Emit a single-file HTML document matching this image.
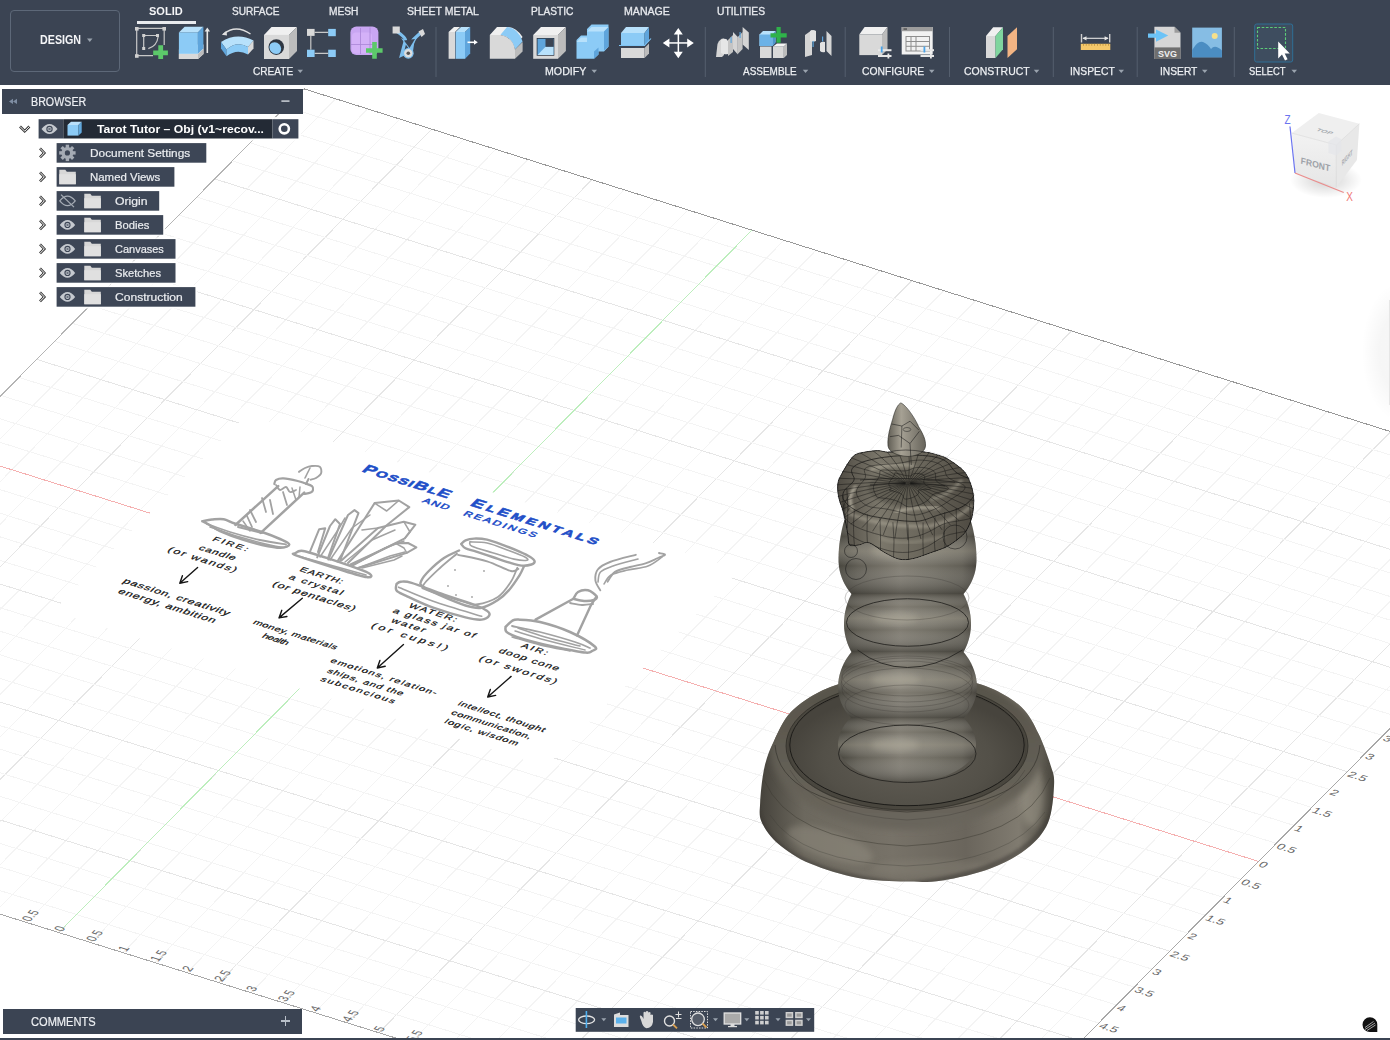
<!DOCTYPE html><html><head><meta charset="utf-8"><style>
html,body{margin:0;padding:0;width:1390px;height:1040px;overflow:hidden;background:#fff;}
body{position:relative;font-family:"Liberation Sans",sans-serif;}
.t{position:absolute;white-space:nowrap;line-height:1;transform-origin:0 0;}
.abs{position:absolute;}
#tb{position:absolute;left:0;top:0;width:1390px;height:85px;background:#3b4453;}
</style></head><body>
<svg class="abs" style="left:0;top:0" width="1390" height="1040" viewBox="0 0 1390 1040">
<defs><clipPath id="gc"><polygon points="-390.0,792.1 921.3,1202.5 1613.8,502.0 303.6,88.7"/></clipPath></defs>
<g clip-path="url(#gc)" stroke-width="1" fill="none" shape-rendering="crispEdges">
<line x1="-390.0" y1="792.1" x2="303.6" y2="88.7" stroke="#f4f4f4" stroke-width="1"/>
<line x1="-357.9" y1="802.1" x2="335.7" y2="98.8" stroke="#f4f4f4" stroke-width="1"/>
<line x1="-325.8" y1="812.2" x2="367.7" y2="108.9" stroke="#f4f4f4" stroke-width="1"/>
<line x1="-293.7" y1="822.2" x2="399.8" y2="119.0" stroke="#f4f4f4" stroke-width="1"/>
<line x1="-261.6" y1="832.3" x2="431.8" y2="129.1" stroke="#e6e6e6" stroke-width="1"/>
<line x1="-229.5" y1="842.3" x2="463.9" y2="139.2" stroke="#f4f4f4" stroke-width="1"/>
<line x1="-197.5" y1="852.3" x2="495.9" y2="149.3" stroke="#f4f4f4" stroke-width="1"/>
<line x1="-165.4" y1="862.4" x2="528.0" y2="159.4" stroke="#f4f4f4" stroke-width="1"/>
<line x1="-133.4" y1="872.4" x2="560.0" y2="169.5" stroke="#f4f4f4" stroke-width="1"/>
<line x1="-101.3" y1="882.4" x2="592.0" y2="179.6" stroke="#e6e6e6" stroke-width="1"/>
<line x1="-69.3" y1="892.4" x2="624.0" y2="189.7" stroke="#f4f4f4" stroke-width="1"/>
<line x1="-37.2" y1="902.5" x2="656.0" y2="199.8" stroke="#f4f4f4" stroke-width="1"/>
<line x1="-5.2" y1="912.5" x2="688.0" y2="209.9" stroke="#f4f4f4" stroke-width="1"/>
<line x1="26.8" y1="922.5" x2="720.0" y2="220.0" stroke="#f4f4f4" stroke-width="1"/>
<line x1="58.9" y1="932.5" x2="752.0" y2="230.1" stroke="#e6e6e6" stroke-width="1"/>
<line x1="90.9" y1="942.6" x2="784.0" y2="240.2" stroke="#f4f4f4" stroke-width="1"/>
<line x1="122.9" y1="952.6" x2="816.0" y2="250.3" stroke="#f4f4f4" stroke-width="1"/>
<line x1="154.9" y1="962.6" x2="848.0" y2="260.4" stroke="#f4f4f4" stroke-width="1"/>
<line x1="186.9" y1="972.6" x2="880.0" y2="270.5" stroke="#f4f4f4" stroke-width="1"/>
<line x1="218.9" y1="982.6" x2="911.9" y2="280.6" stroke="#e6e6e6" stroke-width="1"/>
<line x1="250.9" y1="992.6" x2="943.9" y2="290.6" stroke="#f4f4f4" stroke-width="1"/>
<line x1="282.8" y1="1002.6" x2="975.8" y2="300.7" stroke="#f4f4f4" stroke-width="1"/>
<line x1="314.8" y1="1012.6" x2="1007.8" y2="310.8" stroke="#f4f4f4" stroke-width="1"/>
<line x1="346.8" y1="1022.7" x2="1039.7" y2="320.9" stroke="#f4f4f4" stroke-width="1"/>
<line x1="378.8" y1="1032.7" x2="1071.7" y2="330.9" stroke="#e6e6e6" stroke-width="1"/>
<line x1="410.7" y1="1042.7" x2="1103.6" y2="341.0" stroke="#f4f4f4" stroke-width="1"/>
<line x1="442.7" y1="1052.7" x2="1135.5" y2="351.1" stroke="#f4f4f4" stroke-width="1"/>
<line x1="474.6" y1="1062.7" x2="1167.5" y2="361.2" stroke="#f4f4f4" stroke-width="1"/>
<line x1="506.6" y1="1072.7" x2="1199.4" y2="371.2" stroke="#f4f4f4" stroke-width="1"/>
<line x1="538.5" y1="1082.6" x2="1231.3" y2="381.3" stroke="#e6e6e6" stroke-width="1"/>
<line x1="570.4" y1="1092.6" x2="1263.2" y2="391.4" stroke="#f4f4f4" stroke-width="1"/>
<line x1="602.4" y1="1102.6" x2="1295.1" y2="401.4" stroke="#f4f4f4" stroke-width="1"/>
<line x1="634.3" y1="1112.6" x2="1327.0" y2="411.5" stroke="#f4f4f4" stroke-width="1"/>
<line x1="666.2" y1="1122.6" x2="1358.9" y2="421.5" stroke="#f4f4f4" stroke-width="1"/>
<line x1="698.1" y1="1132.6" x2="1390.8" y2="431.6" stroke="#e6e6e6" stroke-width="1"/>
<line x1="730.0" y1="1142.6" x2="1422.6" y2="441.7" stroke="#f4f4f4" stroke-width="1"/>
<line x1="761.9" y1="1152.6" x2="1454.5" y2="451.7" stroke="#f4f4f4" stroke-width="1"/>
<line x1="793.8" y1="1162.5" x2="1486.4" y2="461.8" stroke="#f4f4f4" stroke-width="1"/>
<line x1="825.7" y1="1172.5" x2="1518.2" y2="471.8" stroke="#f4f4f4" stroke-width="1"/>
<line x1="857.6" y1="1182.5" x2="1550.1" y2="481.9" stroke="#e6e6e6" stroke-width="1"/>
<line x1="889.5" y1="1192.5" x2="1582.0" y2="491.9" stroke="#f4f4f4" stroke-width="1"/>
<line x1="921.3" y1="1202.5" x2="1613.8" y2="502.0" stroke="#f4f4f4" stroke-width="1"/>
<line x1="-390.0" y1="792.1" x2="921.3" y2="1202.5" stroke="#f4f4f4" stroke-width="1"/>
<line x1="-372.2" y1="774.1" x2="939.1" y2="1184.5" stroke="#f4f4f4" stroke-width="1"/>
<line x1="-354.4" y1="756.1" x2="956.8" y2="1166.6" stroke="#f4f4f4" stroke-width="1"/>
<line x1="-336.7" y1="738.0" x2="974.5" y2="1148.6" stroke="#f4f4f4" stroke-width="1"/>
<line x1="-318.9" y1="720.0" x2="992.3" y2="1130.7" stroke="#e6e6e6" stroke-width="1"/>
<line x1="-301.1" y1="702.0" x2="1010.0" y2="1112.7" stroke="#f4f4f4" stroke-width="1"/>
<line x1="-283.3" y1="684.0" x2="1027.8" y2="1094.8" stroke="#f4f4f4" stroke-width="1"/>
<line x1="-265.6" y1="665.9" x2="1045.5" y2="1076.8" stroke="#f4f4f4" stroke-width="1"/>
<line x1="-247.8" y1="647.9" x2="1063.3" y2="1058.9" stroke="#f4f4f4" stroke-width="1"/>
<line x1="-230.0" y1="629.9" x2="1081.0" y2="1040.9" stroke="#e6e6e6" stroke-width="1"/>
<line x1="-212.3" y1="611.9" x2="1098.7" y2="1023.0" stroke="#f4f4f4" stroke-width="1"/>
<line x1="-194.5" y1="593.8" x2="1116.5" y2="1005.0" stroke="#f4f4f4" stroke-width="1"/>
<line x1="-176.7" y1="575.8" x2="1134.2" y2="987.1" stroke="#f4f4f4" stroke-width="1"/>
<line x1="-158.9" y1="557.8" x2="1152.0" y2="969.1" stroke="#f4f4f4" stroke-width="1"/>
<line x1="-141.1" y1="539.7" x2="1169.7" y2="951.2" stroke="#e6e6e6" stroke-width="1"/>
<line x1="-123.4" y1="521.7" x2="1187.5" y2="933.2" stroke="#f4f4f4" stroke-width="1"/>
<line x1="-105.6" y1="503.7" x2="1205.2" y2="915.2" stroke="#f4f4f4" stroke-width="1"/>
<line x1="-87.8" y1="485.6" x2="1223.0" y2="897.3" stroke="#f4f4f4" stroke-width="1"/>
<line x1="-70.0" y1="467.6" x2="1240.8" y2="879.3" stroke="#f4f4f4" stroke-width="1"/>
<line x1="-52.2" y1="449.6" x2="1258.5" y2="861.4" stroke="#e6e6e6" stroke-width="1"/>
<line x1="-34.5" y1="431.5" x2="1276.3" y2="843.4" stroke="#f4f4f4" stroke-width="1"/>
<line x1="-16.7" y1="413.5" x2="1294.0" y2="825.4" stroke="#f4f4f4" stroke-width="1"/>
<line x1="1.1" y1="395.5" x2="1311.8" y2="807.5" stroke="#f4f4f4" stroke-width="1"/>
<line x1="18.9" y1="377.4" x2="1329.5" y2="789.5" stroke="#f4f4f4" stroke-width="1"/>
<line x1="36.7" y1="359.4" x2="1347.3" y2="771.6" stroke="#e6e6e6" stroke-width="1"/>
<line x1="54.5" y1="341.3" x2="1365.1" y2="753.6" stroke="#f4f4f4" stroke-width="1"/>
<line x1="72.3" y1="323.3" x2="1382.8" y2="735.6" stroke="#f4f4f4" stroke-width="1"/>
<line x1="90.0" y1="305.3" x2="1400.6" y2="717.7" stroke="#f4f4f4" stroke-width="1"/>
<line x1="107.8" y1="287.2" x2="1418.3" y2="699.7" stroke="#f4f4f4" stroke-width="1"/>
<line x1="125.6" y1="269.2" x2="1436.1" y2="681.7" stroke="#e6e6e6" stroke-width="1"/>
<line x1="143.4" y1="251.1" x2="1453.9" y2="663.7" stroke="#f4f4f4" stroke-width="1"/>
<line x1="161.2" y1="233.1" x2="1471.6" y2="645.8" stroke="#f4f4f4" stroke-width="1"/>
<line x1="179.0" y1="215.0" x2="1489.4" y2="627.8" stroke="#f4f4f4" stroke-width="1"/>
<line x1="196.8" y1="197.0" x2="1507.2" y2="609.8" stroke="#f4f4f4" stroke-width="1"/>
<line x1="214.6" y1="178.9" x2="1524.9" y2="591.8" stroke="#e6e6e6" stroke-width="1"/>
<line x1="232.4" y1="160.9" x2="1542.7" y2="573.9" stroke="#f4f4f4" stroke-width="1"/>
<line x1="250.2" y1="142.8" x2="1560.5" y2="555.9" stroke="#f4f4f4" stroke-width="1"/>
<line x1="268.0" y1="124.8" x2="1578.3" y2="537.9" stroke="#f4f4f4" stroke-width="1"/>
<line x1="285.8" y1="106.7" x2="1596.0" y2="519.9" stroke="#f4f4f4" stroke-width="1"/>
<line x1="303.6" y1="88.7" x2="1613.8" y2="502.0" stroke="#e6e6e6" stroke-width="1"/>
</g>
<g shape-rendering="crispEdges">
<line x1="303.6" y1="88.7" x2="1613.8" y2="502.0" stroke="#999999" stroke-width="1"/>
<line x1="921.3" y1="1202.5" x2="1613.8" y2="502.0" stroke="#a8a8a8" stroke-width="1"/>
<line x1="-390.0" y1="792.1" x2="303.6" y2="88.7" stroke="#b4b4b4" stroke-width="1"/>
<line x1="-390.0" y1="792.1" x2="921.3" y2="1202.5" stroke="#a8a8a8" stroke-width="1"/>
<line x1="-52.2" y1="449.6" x2="1258.5" y2="861.4" stroke="#f5b0b0" stroke-width="1"/>
<line x1="62.4" y1="928.9" x2="752.0" y2="230.1" stroke="#bdeebd" stroke-width="1"/>
</g>
<g font-family="Liberation Sans" font-size="10" fill="#666">
<text transform="matrix(0.710 -0.714 1.276 0.402 29.8 922.0)">0.5</text>
<text transform="matrix(0.710 -0.714 1.276 0.402 61.9 932.0)">0</text>
<text transform="matrix(0.710 -0.714 1.276 0.402 93.9 942.1)">0.5</text>
<text transform="matrix(0.710 -0.714 1.276 0.402 125.9 952.1)">1</text>
<text transform="matrix(0.710 -0.714 1.276 0.402 157.9 962.1)">1.5</text>
<text transform="matrix(0.710 -0.714 1.276 0.402 189.9 972.1)">2</text>
<text transform="matrix(0.710 -0.714 1.276 0.402 221.9 982.1)">2.5</text>
<text transform="matrix(0.710 -0.714 1.276 0.402 253.9 992.1)">3</text>
<text transform="matrix(0.710 -0.714 1.276 0.402 285.8 1002.1)">3.5</text>
<text transform="matrix(0.710 -0.714 1.276 0.402 317.8 1012.1)">4</text>
<text transform="matrix(0.710 -0.714 1.276 0.402 349.8 1022.2)">4.5</text>
<text transform="matrix(0.710 -0.714 1.276 0.402 381.8 1032.2)">5</text>
<text transform="matrix(0.710 -0.714 1.276 0.402 413.7 1042.2)">5.5</text>
<text transform="matrix(1.276 0.402 -0.710 0.714 1097.7 1027.5)" font-size="10">4.5</text>
<text transform="matrix(1.276 0.402 -0.710 0.714 1115.5 1009.5)" font-size="10">4</text>
<text transform="matrix(1.276 0.402 -0.710 0.714 1133.2 991.6)" font-size="10">3.5</text>
<text transform="matrix(1.276 0.402 -0.710 0.714 1151.0 973.6)" font-size="10">3</text>
<text transform="matrix(1.276 0.402 -0.710 0.714 1168.7 955.7)" font-size="10">2.5</text>
<text transform="matrix(1.276 0.402 -0.710 0.714 1186.5 937.7)" font-size="10">2</text>
<text transform="matrix(1.276 0.402 -0.710 0.714 1204.2 919.7)" font-size="10">1.5</text>
<text transform="matrix(1.276 0.402 -0.710 0.714 1222.0 901.8)" font-size="10">1</text>
<text transform="matrix(1.276 0.402 -0.710 0.714 1239.8 883.8)" font-size="10">0.5</text>
<text transform="matrix(1.276 0.402 -0.710 0.714 1257.5 865.9)" font-size="10">0</text>
<text transform="matrix(1.276 0.402 -0.710 0.714 1275.3 847.9)" font-size="10">0.5</text>
<text transform="matrix(1.276 0.402 -0.710 0.714 1293.0 829.9)" font-size="10">1</text>
<text transform="matrix(1.276 0.402 -0.710 0.714 1310.8 812.0)" font-size="10">1.5</text>
<text transform="matrix(1.276 0.402 -0.710 0.714 1328.5 794.0)" font-size="10">2</text>
<text transform="matrix(1.276 0.402 -0.710 0.714 1346.3 776.1)" font-size="10">2.5</text>
<text transform="matrix(1.276 0.402 -0.710 0.714 1364.1 758.1)" font-size="10">3</text>
<text transform="matrix(1.276 0.402 -0.710 0.714 1381.8 740.1)" font-size="10">3.5</text>
</g>
</svg>
<svg class="abs" style="left:0;top:0" width="1390" height="1040" viewBox="0 0 1390 1040">
<polygon points="246.6,414.9 739.4,569.9 545.9,765.9 53,611.2" fill="#fff"/>
<g><path d="M202.3 521.2 C203.9 520.9 208.4 519.8 212.0 519.5 C215.6 519.2 219.8 518.5 223.7 519.2 C227.6 519.9 229.0 521.7 235.4 523.8 C241.8 525.9 254.6 529.5 262.0 532.0 C269.4 534.5 275.4 536.9 280.0 539.0 C284.6 541.1 289.2 543.0 289.3 544.5 C289.4 546.0 285.4 547.7 280.8 547.8 C276.2 547.9 268.5 546.4 262.0 545.0 C255.5 543.6 248.9 541.7 241.9 539.4 C234.9 537.1 225.4 533.4 220.0 531.0 C214.6 528.6 212.4 526.6 209.5 525.0 C206.6 523.4 203.5 521.8 202.3 521.2" fill="none" stroke="#a2a2a2" stroke-width="2.5" stroke-linejoin="round" stroke-linecap="round"/><path d="M206.9 523.8 C210.8 525.2 221.2 529.3 230.0 532.0 C238.8 534.7 250.7 537.9 260.0 540.0 C269.3 542.1 281.7 543.8 286.0 544.5" fill="none" stroke="#a2a2a2" stroke-width="1.8" stroke-linejoin="round" stroke-linecap="round"/><path d="M210.0 527.0 C215.0 528.7 230.0 534.0 240.0 537.0 C250.0 540.0 262.7 543.2 270.0 545.0 C277.3 546.8 281.7 547.1 284.0 547.5" fill="none" stroke="#a2a2a2" stroke-width="1.5" stroke-linejoin="round" stroke-linecap="round"/><path d="M235.4 525.0 L278.2 486.1" fill="none" stroke="#a2a2a2" stroke-width="2.5" stroke-linejoin="round" stroke-linecap="round"/><path d="M260.7 532.9 L304.2 492.6" fill="none" stroke="#a2a2a2" stroke-width="2.5" stroke-linejoin="round" stroke-linecap="round"/><path d="M238.0 527.0 L262.0 533.0" fill="none" stroke="#a2a2a2" stroke-width="2.0" stroke-linejoin="round" stroke-linecap="round"/><path d="M274.3 484.0 C274.6 483.3 274.5 480.9 276.0 480.0 C277.5 479.1 279.8 478.2 283.4 478.4 C287.0 478.6 294.3 480.2 297.7 481.0 C301.1 481.8 301.6 482.1 304.0 483.0 C306.4 483.9 310.5 484.9 312.0 486.1 C313.5 487.3 313.2 488.9 313.0 490.0 C312.8 491.1 312.2 491.9 310.7 492.6 C309.2 493.3 305.1 493.8 304.0 494.0" fill="none" stroke="#a2a2a2" stroke-width="2.2" stroke-linejoin="round" stroke-linecap="round"/><path d="M276.0 485.0 C276.7 485.8 278.3 489.7 280.0 490.0 C281.7 490.3 284.3 486.7 286.0 487.0 C287.7 487.3 288.3 491.5 290.0 492.0 C291.7 492.5 295.0 490.3 296.0 490.0" fill="none" stroke="#a2a2a2" stroke-width="1.8" stroke-linejoin="round" stroke-linecap="round"/><path d="M299.0 471.9 C300.0 471.2 302.8 469.0 305.0 468.0 C307.2 467.0 309.5 466.2 312.0 466.0 C314.5 465.8 318.3 465.5 319.8 466.7 C321.3 467.9 321.7 471.3 321.1 473.2 C320.5 475.1 317.7 476.9 316.0 478.0 C314.3 479.1 311.6 479.4 310.7 479.7" fill="none" stroke="#a2a2a2" stroke-width="1.9" stroke-linejoin="round" stroke-linecap="round"/><path d="M305.0 478.0 C305.5 477.0 307.2 473.7 308.0 472.0 C308.8 470.3 309.7 468.7 310.0 468.0" fill="none" stroke="#a2a2a2" stroke-width="1.6" stroke-linejoin="round" stroke-linecap="round"/><path d="M308.5 479.0 L306.0 484.0" fill="none" stroke="#a2a2a2" stroke-width="2.0" stroke-linejoin="round" stroke-linecap="round"/><path d="M250.0 510.0 L256.0 522.0" fill="none" stroke="#a2a2a2" stroke-width="1.8" stroke-linejoin="round" stroke-linecap="round"/><path d="M262.0 498.0 L266.0 512.0" fill="none" stroke="#a2a2a2" stroke-width="1.8" stroke-linejoin="round" stroke-linecap="round"/><path d="M270.0 500.0 L273.0 514.0" fill="none" stroke="#a2a2a2" stroke-width="1.8" stroke-linejoin="round" stroke-linecap="round"/><path d="M283.0 492.0 L287.0 505.0" fill="none" stroke="#a2a2a2" stroke-width="1.8" stroke-linejoin="round" stroke-linecap="round"/><path d="M247.0 516.0 L252.0 527.0" fill="none" stroke="#a2a2a2" stroke-width="1.8" stroke-linejoin="round" stroke-linecap="round"/><path d="M295.0 553.4 C296.4 553.0 297.3 550.0 303.1 550.9 C308.9 551.8 319.3 555.4 330.0 559.0 C340.7 562.6 361.4 569.5 367.5 572.5 C373.6 575.5 371.9 577.9 366.5 577.1 C361.1 576.4 346.8 571.6 335.0 568.0 C323.2 564.4 302.7 557.8 296.0 555.4 C289.3 553.0 295.2 553.7 295.0 553.4" fill="none" stroke="#a2a2a2" stroke-width="2.5" stroke-linejoin="round" stroke-linecap="round"/><path d="M298.0 556.0 C303.3 557.5 318.7 561.8 330.0 565.0 C341.3 568.2 360.0 573.3 366.0 575.0" fill="none" stroke="#a2a2a2" stroke-width="1.6" stroke-linejoin="round" stroke-linecap="round"/><path d="M310.1 551.4 L319.2 529.2 L325.2 528.2 L318.0 552.0" fill="none" stroke="#a2a2a2" stroke-width="2.0" stroke-linejoin="round" stroke-linecap="round"/><path d="M317.2 557.4 L330.0 526.0 L335.3 519.2 L340.0 524.0 L328.0 558.0" fill="none" stroke="#a2a2a2" stroke-width="2.0" stroke-linejoin="round" stroke-linecap="round"/><path d="M328.3 559.5 L348.0 515.0 L354.5 510.1 L358.5 513.1 L340.0 561.0" fill="none" stroke="#a2a2a2" stroke-width="2.0" stroke-linejoin="round" stroke-linecap="round"/><path d="M337.3 561.5 L374.6 503.1 L398.8 500.5 L409.3 507.1 L386.7 525.2 L348.0 563.0" fill="none" stroke="#a2a2a2" stroke-width="2.0" stroke-linejoin="round" stroke-linecap="round"/><path d="M341.4 560.5 L378.0 528.0 L403.8 521.7 L415.4 524.7 L404.8 538.3 L352.0 565.0" fill="none" stroke="#a2a2a2" stroke-width="2.0" stroke-linejoin="round" stroke-linecap="round"/><path d="M350.4 564.5 L395.7 543.3 L408.0 543.0 L416.4 547.4 L406.8 552.9 L358.0 568.0" fill="none" stroke="#a2a2a2" stroke-width="2.0" stroke-linejoin="round" stroke-linecap="round"/><path d="M374.6 503.1 L386.7 511.0 L398.8 500.5" fill="none" stroke="#a2a2a2" stroke-width="1.6" stroke-linejoin="round" stroke-linecap="round"/><path d="M362.0 530.0 L378.0 528.0" fill="none" stroke="#a2a2a2" stroke-width="1.6" stroke-linejoin="round" stroke-linecap="round"/><path d="M461.2 544.0 C461.9 543.4 463.3 541.2 465.5 540.3 C467.7 539.4 470.6 538.7 474.2 538.6 C477.8 538.5 482.2 538.6 487.1 539.7 C492.0 540.8 497.9 543.1 503.3 545.1 C508.7 547.1 515.0 549.6 519.5 551.6 C524.0 553.6 527.8 555.4 530.3 557.0 C532.8 558.6 534.4 560.0 534.6 561.3 C534.8 562.5 533.5 563.8 531.4 564.5 C529.2 565.2 525.5 566.0 521.7 565.6 C517.9 565.2 513.6 563.8 508.7 562.4 C503.8 561.0 497.9 558.8 492.5 557.0 C487.1 555.2 480.8 553.1 476.3 551.6 C471.8 550.1 468.0 549.6 465.5 548.3 C463.0 547.0 461.9 544.7 461.2 544.0" fill="none" stroke="#a2a2a2" stroke-width="2.4" stroke-linejoin="round" stroke-linecap="round"/><path d="M469.9 541.9 C472.8 542.1 480.6 541.6 487.1 543.0 C493.6 544.4 502.4 548.2 508.7 550.5 C515.0 552.8 521.9 555.4 524.9 557.0 C527.9 558.6 528.8 559.9 527.0 560.2 C525.2 560.6 519.9 560.4 514.1 559.1 C508.4 557.9 499.5 554.9 492.5 552.7 C485.5 550.6 475.8 548.0 472.0 546.2 C468.2 544.4 470.2 542.6 469.9 541.9" fill="none" stroke="#a2a2a2" stroke-width="1.6" stroke-linejoin="round" stroke-linecap="round"/><path d="M459.1 550.5 C456.6 551.8 449.1 554.6 444.0 558.0 C438.9 561.4 432.6 567.2 428.8 571.0 C425.0 574.8 422.4 578.2 421.3 580.7 C420.2 583.2 419.5 583.8 422.4 586.1 C425.3 588.4 431.4 591.5 438.6 594.7 C445.8 597.9 458.3 603.3 465.5 605.5 C472.7 607.7 476.3 608.6 481.7 607.7 C487.1 606.8 493.4 603.0 497.9 600.1 C502.4 597.2 505.1 594.5 508.7 590.4 C512.3 586.3 517.0 579.2 519.5 575.3 C522.0 571.3 523.1 568.1 523.8 566.7" fill="none" stroke="#a2a2a2" stroke-width="2.4" stroke-linejoin="round" stroke-linecap="round"/><path d="M456.9 553.7 C454.1 556.1 445.6 562.8 440.0 568.0 C434.4 573.2 425.5 581.3 423.5 585.0 C421.5 588.7 420.8 587.5 427.8 590.4 C434.8 593.3 457.4 599.9 465.5 602.3 C473.6 604.6 470.9 605.4 476.3 604.5 C481.7 603.6 492.1 600.7 497.9 596.9 C503.7 593.1 507.7 586.6 510.9 581.8 C514.1 576.9 516.2 570.1 517.3 567.8" fill="none" stroke="#a2a2a2" stroke-width="1.8" stroke-linejoin="round" stroke-linecap="round"/><path d="M458.0 554.8 C462.9 555.9 478.3 558.6 487.1 561.3 C495.9 564.0 505.7 569.8 510.9 571.0 C516.1 572.2 517.1 569.2 518.4 568.8" fill="none" stroke="#a2a2a2" stroke-width="1.8" stroke-linejoin="round" stroke-linecap="round"/><path d="M396.5 584.0 C397.2 583.6 398.3 582.0 400.8 581.8 C403.3 581.6 404.4 580.8 411.6 582.9 C418.8 585.0 433.2 590.9 444.0 594.7 C454.8 598.5 469.1 602.8 476.3 605.5 C483.5 608.2 484.9 609.3 487.1 610.9 C489.3 612.5 490.2 613.8 489.3 615.3 C488.4 616.8 485.7 619.2 481.7 619.6 C477.7 620.0 473.6 619.4 465.5 617.4 C457.4 615.4 443.1 611.3 433.2 607.7 C423.3 604.1 412.3 598.7 406.2 595.8 C400.1 592.9 398.1 592.4 396.5 590.4 C394.9 588.4 396.5 585.1 396.5 584.0" fill="none" stroke="#a2a2a2" stroke-width="2.4" stroke-linejoin="round" stroke-linecap="round"/><path d="M398.6 587.2 C404.4 589.5 419.4 596.4 433.2 601.2 C447.0 606.1 473.6 613.8 481.7 616.3" fill="none" stroke="#a2a2a2" stroke-width="1.6" stroke-linejoin="round" stroke-linecap="round"/><circle cx="455.0" cy="570.0" r="0.9" fill="#a2a2a2"/><circle cx="484.0" cy="571.0" r="0.9" fill="#a2a2a2"/><circle cx="448.0" cy="586.0" r="0.9" fill="#a2a2a2"/><circle cx="456.0" cy="595.0" r="0.9" fill="#a2a2a2"/><circle cx="472.0" cy="597.0" r="0.9" fill="#a2a2a2"/><path d="M505.5 627.0 C506.6 626.0 509.9 622.2 512.0 621.0 C514.1 619.8 513.6 619.4 518.3 619.6 C523.0 619.8 531.4 619.9 540.0 622.0 C548.6 624.1 560.9 627.9 570.0 632.0 C579.1 636.1 591.1 643.3 594.8 646.5 C598.5 649.7 593.5 650.0 592.0 651.0 C590.5 652.0 590.9 653.1 585.6 652.6 C580.3 652.1 569.3 649.9 560.0 648.0 C550.7 646.1 538.7 643.5 530.0 641.0 C521.3 638.5 512.1 635.3 508.0 633.0 C503.9 630.7 505.9 628.0 505.5 627.0" fill="none" stroke="#a2a2a2" stroke-width="2.5" stroke-linejoin="round" stroke-linecap="round"/><path d="M512.0 626.0 C516.7 627.0 529.5 629.3 540.0 632.0 C550.5 634.7 566.7 639.3 575.0 642.0 C583.3 644.7 587.5 647.0 590.0 648.0" fill="none" stroke="#a2a2a2" stroke-width="1.8" stroke-linejoin="round" stroke-linecap="round"/><path d="M518.0 628.0 C522.5 629.5 534.7 634.0 545.0 637.0 C555.3 640.0 574.2 644.5 580.0 646.0" fill="none" stroke="#a2a2a2" stroke-width="1.6" stroke-linejoin="round" stroke-linecap="round"/><path d="M535.5 619.6 L573.4 598.8" fill="none" stroke="#a2a2a2" stroke-width="2.4" stroke-linejoin="round" stroke-linecap="round"/><path d="M577.0 635.5 L591.0 605.0 L596.6 596.4" fill="none" stroke="#a2a2a2" stroke-width="2.4" stroke-linejoin="round" stroke-linecap="round"/><path d="M573.4 598.8 C574.2 597.7 575.6 593.4 578.0 592.0 C580.4 590.6 584.9 589.6 588.0 590.3 C591.1 591.0 595.6 594.8 596.6 596.4 C597.6 598.0 596.1 599.2 594.0 600.0 C591.9 600.8 587.4 601.2 584.0 601.0 C580.6 600.8 575.2 599.2 573.4 598.8" fill="none" stroke="#a2a2a2" stroke-width="2.5" stroke-linejoin="round" stroke-linecap="round"/><path d="M570.0 603.0 C572.0 603.3 578.2 604.8 582.0 605.0 C585.8 605.2 591.2 604.2 593.0 604.0" fill="none" stroke="#a2a2a2" stroke-width="1.8" stroke-linejoin="round" stroke-linecap="round"/><path d="M600.3 590.3 C599.5 588.7 595.8 584.0 595.4 580.5 C595.0 577.0 595.4 572.6 597.8 569.5 C600.2 566.4 603.7 564.5 610.0 562.0 C616.3 559.5 631.5 556.0 635.8 554.8" fill="none" stroke="#a2a2a2" stroke-width="1.9" stroke-linejoin="round" stroke-linecap="round"/><path d="M598.0 582.0 C598.4 580.3 598.0 574.7 600.5 572.0 C603.0 569.3 606.8 568.2 613.0 566.0 C619.2 563.8 633.8 560.2 638.0 559.0" fill="none" stroke="#a2a2a2" stroke-width="1.6" stroke-linejoin="round" stroke-linecap="round"/><path d="M607.6 581.7 C608.8 580.1 611.3 574.4 615.0 571.9 C618.7 569.4 624.9 568.4 630.0 567.0 C635.1 565.6 640.8 564.8 645.5 563.3 C650.2 561.8 654.7 559.4 658.0 558.0 C661.3 556.6 664.9 555.6 665.1 554.8 C665.3 554.0 660.0 553.3 659.0 553.0" fill="none" stroke="#a2a2a2" stroke-width="1.9" stroke-linejoin="round" stroke-linecap="round"/><path d="M604.0 584.0 C605.2 582.5 607.0 577.3 611.0 575.0 C615.0 572.7 621.8 571.5 628.0 570.0 C634.2 568.5 642.3 568.2 648.0 566.0 C653.7 563.8 659.7 558.5 662.0 557.0" fill="none" stroke="#a2a2a2" stroke-width="1.6" stroke-linejoin="round" stroke-linecap="round"/><path d="M345.0 562.0 L372.0 540.0 L395.0 530.0" fill="none" stroke="#a2a2a2" stroke-width="1.5" stroke-linejoin="round" stroke-linecap="round"/><path d="M352.0 566.0 L385.0 548.0 L404.0 541.0" fill="none" stroke="#a2a2a2" stroke-width="1.5" stroke-linejoin="round" stroke-linecap="round"/><path d="M358.0 568.0 L390.0 556.0 L405.0 552.0" fill="none" stroke="#a2a2a2" stroke-width="1.5" stroke-linejoin="round" stroke-linecap="round"/><path d="M330.0 560.0 L352.0 528.0 L370.0 515.0" fill="none" stroke="#a2a2a2" stroke-width="1.5" stroke-linejoin="round" stroke-linecap="round"/><path d="M320.0 557.0 L338.0 530.0 L345.0 518.0" fill="none" stroke="#a2a2a2" stroke-width="1.5" stroke-linejoin="round" stroke-linecap="round"/><path d="M362.0 568.0 L394.0 560.0 L402.0 556.0" fill="none" stroke="#a2a2a2" stroke-width="1.5" stroke-linejoin="round" stroke-linecap="round"/><path d="M395.7 543.3 L404.0 548.0 L406.8 552.9" fill="none" stroke="#a2a2a2" stroke-width="1.5" stroke-linejoin="round" stroke-linecap="round"/><path d="M403.8 521.7 L410.0 532.0 L404.8 538.3" fill="none" stroke="#a2a2a2" stroke-width="1.5" stroke-linejoin="round" stroke-linecap="round"/><path d="M515.0 631.0 C520.0 632.5 533.3 636.8 545.0 640.0 C556.7 643.2 578.3 648.3 585.0 650.0" fill="none" stroke="#a2a2a2" stroke-width="1.5" stroke-linejoin="round" stroke-linecap="round"/><path d="M512.0 637.0 C516.7 638.3 530.3 642.7 540.0 645.0 C549.7 647.3 565.0 650.0 570.0 651.0" fill="none" stroke="#a2a2a2" stroke-width="1.4" stroke-linejoin="round" stroke-linecap="round"/><path d="M215.0 529.0 C220.0 530.8 234.2 536.8 245.0 540.0 C255.8 543.2 274.2 546.7 280.0 548.0" fill="none" stroke="#a2a2a2" stroke-width="1.4" stroke-linejoin="round" stroke-linecap="round"/><path d="M243.0 521.0 L250.0 531.0" fill="none" stroke="#a2a2a2" stroke-width="1.5" stroke-linejoin="round" stroke-linecap="round"/><path d="M292.0 488.0 L296.0 500.0" fill="none" stroke="#a2a2a2" stroke-width="1.5" stroke-linejoin="round" stroke-linecap="round"/><path d="M300.0 487.0 L299.0 497.0" fill="none" stroke="#a2a2a2" stroke-width="1.5" stroke-linejoin="round" stroke-linecap="round"/></g>
<g transform="matrix(0.638 0.201 -0.355 0.357 246.3 415.4)" font-family="Liberation Sans">
<text x="203" y="42" fill="#1f4fc8" font-weight="bold" stroke="#1f4fc8" stroke-width="1.3" textLength="135" lengthAdjust="spacing"><tspan font-size="28">P</tspan><tspan font-size="21">OSSI</tspan><tspan font-size="27">B</tspan><tspan font-size="21">L</tspan><tspan font-size="27">E</tspan></text>
<text x="373" y="42" fill="#1f4fc8" font-weight="bold" stroke="#1f4fc8" stroke-width="1.3" textLength="197" lengthAdjust="spacing"><tspan font-size="28">E</tspan><tspan font-size="21">L</tspan><tspan font-size="25">E</tspan><tspan font-size="22">MENTALS</tspan></text>
<text x="312.0" y="67.0" font-size="17.0" fill="#1f4fc8" textLength="40.0" lengthAdjust="spacing" stroke="#1f4fc8" stroke-width="1">AND</text>
<text x="376.0" y="67.0" font-size="17.0" fill="#1f4fc8" textLength="113.0" lengthAdjust="spacing" stroke="#1f4fc8" stroke-width="1">READINGS</text>
<text x="107.0" y="290.0" font-size="16.0" fill="#111" textLength="54.0" lengthAdjust="spacing" stroke="#111" stroke-width="0.45">FIRE:</text>
<text x="101.0" y="318.0" font-size="17.0" fill="#111" textLength="56.0" lengthAdjust="spacing" stroke="#111" stroke-width="0.45">candle</text>
<text x="66.0" y="343.0" font-size="18.0" fill="#111" textLength="106.0" lengthAdjust="spacing" stroke="#111" stroke-width="0.45">(or wands)</text>
<text x="50.0" y="440.0" font-size="18.0" fill="#111" textLength="165.0" lengthAdjust="spacing" stroke="#111" stroke-width="0.45">passion, creativity</text>
<text x="56.0" y="465.0" font-size="18.0" fill="#111" textLength="151.0" lengthAdjust="spacing" stroke="#111" stroke-width="0.45">energy, ambition</text>
<text x="247.0" y="296.0" font-size="16.0" fill="#111" textLength="66.0" lengthAdjust="spacing" stroke="#111" stroke-width="0.45">EARTH:</text>
<text x="243.0" y="320.0" font-size="17.0" fill="#111" textLength="83.0" lengthAdjust="spacing" stroke="#111" stroke-width="0.45">a crystal</text>
<text x="232.0" y="346.0" font-size="18.0" fill="#111" textLength="128.0" lengthAdjust="spacing" stroke="#111" stroke-width="0.45">(or pentacles)</text>
<text x="254.0" y="440.0" font-size="16.0" fill="#111" textLength="130.0" lengthAdjust="spacing" stroke="#111" stroke-width="0.45">money, materials</text>
<text x="281.0" y="463.0" font-size="16.0" fill="#111" textLength="40.0" lengthAdjust="spacing" stroke="#111" stroke-width="0.45">health</text>
<text x="420.0" y="300.0" font-size="16.0" fill="#111" textLength="74.0" lengthAdjust="spacing" stroke="#111" stroke-width="0.45">WATER:</text>
<text x="407.0" y="322.0" font-size="17.0" fill="#111" textLength="128.0" lengthAdjust="spacing" stroke="#111" stroke-width="0.45">a glass jar of</text>
<text x="417.0" y="344.0" font-size="17.0" fill="#111" textLength="52.0" lengthAdjust="spacing" stroke="#111" stroke-width="0.45">water</text>
<text x="399.0" y="368.0" font-size="18.0" fill="#111" textLength="118.0" lengthAdjust="spacing" stroke="#111" stroke-width="0.45">(or cups!)</text>
<text x="392.0" y="470.0" font-size="16.0" fill="#111" textLength="165.0" lengthAdjust="spacing" stroke="#111" stroke-width="0.45">emotions, relation-</text>
<text x="400.0" y="494.0" font-size="16.0" fill="#111" textLength="118.0" lengthAdjust="spacing" stroke="#111" stroke-width="0.45">ships, and the</text>
<text x="402.0" y="516.0" font-size="16.0" fill="#111" textLength="115.0" lengthAdjust="spacing" stroke="#111" stroke-width="0.45">subconcious</text>
<text x="602.0" y="310.0" font-size="16.0" fill="#111" textLength="40.0" lengthAdjust="spacing" stroke="#111" stroke-width="0.45">AIR:</text>
<text x="581.0" y="336.0" font-size="17.0" fill="#111" textLength="93.0" lengthAdjust="spacing" stroke="#111" stroke-width="0.45">doop cone</text>
<text x="567.0" y="366.0" font-size="18.0" fill="#111" textLength="120.0" lengthAdjust="spacing" stroke="#111" stroke-width="0.45">(or swords)</text>
<text x="595.0" y="476.0" font-size="16.0" fill="#111" textLength="135.0" lengthAdjust="spacing" stroke="#111" stroke-width="0.45">intellect, thought</text>
<text x="598.0" y="500.0" font-size="16.0" fill="#111" textLength="124.0" lengthAdjust="spacing" stroke="#111" stroke-width="0.45">communication,</text>
<text x="600.0" y="523.0" font-size="16.0" fill="#111" textLength="114.0" lengthAdjust="spacing" stroke="#111" stroke-width="0.45">logic, wisdom</text>
</g>
<path d="M197.6 567.4L179.8 583.3M182.4 575.7L179.8 583.3L187.7 581.6" fill="none" stroke="#151515" stroke-width="1.4" stroke-linecap="round" stroke-linejoin="round"/>
<path d="M302.3 598.3L279.0 617.9M281.8 610.3L279.0 617.9L286.9 616.5" fill="none" stroke="#151515" stroke-width="1.4" stroke-linecap="round" stroke-linejoin="round"/>
<path d="M403.5 644.6L377.3 668.0M379.9 660.4L377.3 668.0L385.2 666.3" fill="none" stroke="#151515" stroke-width="1.4" stroke-linecap="round" stroke-linejoin="round"/>
<path d="M511.1 676.4L487.7 697.0M490.3 689.4L487.7 697.0L495.6 695.4" fill="none" stroke="#151515" stroke-width="1.4" stroke-linecap="round" stroke-linejoin="round"/>
</svg>
<svg class="abs" style="left:0;top:0" width="1390" height="1040" viewBox="0 0 1390 1040">
<defs>
<linearGradient id="mcol" x1="838" y1="0" x2="976" y2="0" gradientUnits="userSpaceOnUse">
 <stop offset="0" stop-color="#48463e"/><stop offset="0.15" stop-color="#625f56"/><stop offset="0.45" stop-color="#807c72"/><stop offset="0.7" stop-color="#716e64"/><stop offset="0.9" stop-color="#625f56"/><stop offset="1" stop-color="#49463f"/></linearGradient>
<linearGradient id="mdome" x1="760" y1="0" x2="1054" y2="0" gradientUnits="userSpaceOnUse">
 <stop offset="0" stop-color="#46433c"/><stop offset="0.15" stop-color="#6c685e"/><stop offset="0.45" stop-color="#777268"/><stop offset="0.7" stop-color="#6a655c"/><stop offset="0.88" stop-color="#807b70"/><stop offset="1" stop-color="#49463e"/></linearGradient>
<linearGradient id="mtop" x1="0" y1="676" x2="0" y2="815" gradientUnits="userSpaceOnUse">
 <stop offset="0" stop-color="#565249"/><stop offset="1" stop-color="#69655b"/></linearGradient>
<radialGradient id="mfloor" cx="907" cy="760" r="120" gradientUnits="userSpaceOnUse" gradientTransform="translate(0 760) scale(1 0.55) translate(0 -760)">
 <stop offset="0" stop-color="#625e56"/><stop offset="0.7" stop-color="#535048"/><stop offset="1" stop-color="#47443d"/></radialGradient>
<linearGradient id="mwax" x1="838" y1="0" x2="975" y2="0" gradientUnits="userSpaceOnUse">
 <stop offset="0" stop-color="#4f4b43"/><stop offset="0.3" stop-color="#7b776b"/><stop offset="0.6" stop-color="#6b675c"/><stop offset="1" stop-color="#4d4941"/></linearGradient>
<linearGradient id="mflame" x1="888" y1="0" x2="926" y2="0" gradientUnits="userSpaceOnUse">
 <stop offset="0" stop-color="#625f56"/><stop offset="0.35" stop-color="#a6a194"/><stop offset="1" stop-color="#66635a"/></linearGradient>
<filter id="mblur" x="-20%" y="-20%" width="140%" height="140%"><feGaussianBlur stdDeviation="3"/></filter>
<filter id="mblur2" x="-20%" y="-20%" width="140%" height="140%"><feGaussianBlur stdDeviation="1.5"/></filter>
</defs>
<path d="M760.1 803.5 C760.5 794.3 762.1 777.8 764.4 767.4 C766.7 757.0 769.6 750.2 774.0 741.0 C778.4 731.8 782.9 720.5 790.9 712.1 C798.9 703.7 810.9 695.9 822.1 690.5 C833.3 685.1 844.2 682.2 858.2 679.7 C872.2 677.2 890.2 675.8 906.2 675.6 C922.3 675.4 940.3 676.4 954.3 678.5 C968.3 680.6 979.2 683.2 990.4 688.0 C1001.6 692.8 1013.6 699.7 1021.6 707.3 C1029.6 714.9 1033.7 724.1 1038.5 733.8 C1043.3 743.4 1047.9 756.6 1050.5 765.0 C1053.1 773.4 1054.5 774.6 1054.1 784.2 C1053.7 793.8 1052.6 811.9 1048.0 822.7 C1043.4 833.5 1036.0 841.5 1026.4 849.1 C1016.8 856.7 1004.4 863.2 990.4 868.4 C976.4 873.6 956.3 878.2 942.3 880.4 C928.3 882.6 920.3 882.0 906.2 881.6 C892.2 881.2 874.2 881.0 858.2 878.0 C842.2 875.0 823.3 869.2 810.1 863.6 C796.9 858.0 786.8 851.1 778.8 844.3 C770.8 837.5 765.1 829.5 762.0 822.7 C758.9 815.9 759.7 812.7 760.1 803.5z" fill="url(#mdome)"/>
<clipPath id="domeclip"><path d="M760.1 803.5 C760.5 794.3 762.1 777.8 764.4 767.4 C766.7 757.0 769.6 750.2 774.0 741.0 C778.4 731.8 782.9 720.5 790.9 712.1 C798.9 703.7 810.9 695.9 822.1 690.5 C833.3 685.1 844.2 682.2 858.2 679.7 C872.2 677.2 890.2 675.8 906.2 675.6 C922.3 675.4 940.3 676.4 954.3 678.5 C968.3 680.6 979.2 683.2 990.4 688.0 C1001.6 692.8 1013.6 699.7 1021.6 707.3 C1029.6 714.9 1033.7 724.1 1038.5 733.8 C1043.3 743.4 1047.9 756.6 1050.5 765.0 C1053.1 773.4 1054.5 774.6 1054.1 784.2 C1053.7 793.8 1052.6 811.9 1048.0 822.7 C1043.4 833.5 1036.0 841.5 1026.4 849.1 C1016.8 856.7 1004.4 863.2 990.4 868.4 C976.4 873.6 956.3 878.2 942.3 880.4 C928.3 882.6 920.3 882.0 906.2 881.6 C892.2 881.2 874.2 881.0 858.2 878.0 C842.2 875.0 823.3 869.2 810.1 863.6 C796.9 858.0 786.8 851.1 778.8 844.3 C770.8 837.5 765.1 829.5 762.0 822.7 C758.9 815.9 759.7 812.7 760.1 803.5z"/></clipPath>
<g clip-path="url(#domeclip)">
<path d="M770 805Q800 852 880 866Q950 870 1000 850Q1030 830 1045 790L1060 900H740z" fill="#38352f" opacity="0.0"/>
<ellipse cx="830" cy="845" rx="45" ry="14" fill="#979285" opacity="0.45" filter="url(#mblur)" transform="rotate(18 830 845)"/>
<ellipse cx="1032" cy="795" rx="12" ry="32" fill="#a19c8e" opacity="0.5" filter="url(#mblur)"/>
<ellipse cx="930" cy="868" rx="60" ry="9" fill="#8b867a" opacity="0.35" filter="url(#mblur)"/>
<path d="M755 800Q760 870 906 885Q1050 870 1058 790" fill="none" stroke="#393630" stroke-width="6" opacity="0.45" filter="url(#mblur2)"/>
<ellipse cx="907" cy="750" rx="136" ry="80" fill="url(#mtop)" filter="url(#mblur)"/>
</g>
<ellipse cx="907" cy="746" rx="121" ry="64" fill="#49463e"/>
<ellipse cx="907" cy="745" rx="117.2" ry="60.7" fill="url(#mfloor)" stroke="#1c1b18" stroke-width="1"/>
<ellipse cx="907" cy="746" rx="121" ry="64" fill="none" stroke="#2b2924" stroke-width="0.7"/>
<ellipse cx="907" cy="748" rx="119" ry="62.5" fill="none" stroke="#383631" stroke-width="0.5" opacity="0.7"/>
<path d="M764 780Q790 840 906 846Q1025 840 1050 778" fill="none" stroke="#3a3831" stroke-width="0.6" opacity="0.8"/>
<path d="M775 745Q780 805 907 812Q1035 805 1040 745" fill="none" stroke="#2b2924" stroke-width="0.7" opacity="0.8"/>
<path d="M790 770Q815 815 907 820Q1000 815 1025 770" fill="none" stroke="#35332e" stroke-width="0.5" opacity="0.6"/>
<path d="M770 815Q800 862 906 866Q1010 862 1045 812" fill="none" stroke="#3a3831" stroke-width="0.5" opacity="0.6"/>
<path d="M844.5 520.0 L844.2 521.0 L843.9 522.0 L843.6 523.0 L843.3 524.0 L843.0 525.0 L842.8 526.0 L842.5 527.0 L842.3 528.0 L842.0 529.0 L841.8 530.0 L841.6 531.0 L841.4 532.0 L841.2 533.0 L841.0 534.0 L840.8 535.0 L840.6 536.0 L840.4 537.0 L840.3 538.0 L840.1 539.0 L840.0 540.0 L839.8 541.0 L839.7 542.0 L839.5 543.0 L839.4 544.0 L839.3 545.0 L839.2 546.0 L839.1 547.0 L839.0 548.0 L838.9 549.0 L838.9 550.0 L838.8 551.0 L838.7 552.0 L838.7 553.0 L838.6 554.0 L838.6 555.0 L838.6 556.0 L838.5 557.0 L838.5 558.0 L838.5 559.0 L838.5 560.0 L838.5 561.0 L838.5 562.0 L838.6 563.0 L838.7 564.0 L838.8 565.0 L838.9 566.0 L839.0 567.0 L839.2 568.0 L839.3 569.0 L839.5 570.0 L839.7 571.0 L840.0 572.0 L840.2 573.0 L840.5 574.0 L840.8 575.0 L841.2 576.0 L841.5 577.0 L841.9 578.0 L842.3 579.0 L842.7 580.0 L843.1 581.0 L843.6 582.0 L844.1 583.0 L844.6 584.0 L845.2 585.0 L845.8 586.0 L846.4 587.0 L847.0 588.0 L847.7 589.0 L848.4 590.0 L849.1 591.0 L849.9 592.0 L850.7 593.0 L851.5 594.0 L851.0 595.0 L850.5 596.0 L850.0 597.0 L849.5 598.0 L849.1 599.0 L848.7 600.0 L848.3 601.0 L847.9 602.0 L847.6 603.0 L847.2 604.0 L846.9 605.0 L846.6 606.0 L846.3 607.0 L846.0 608.0 L845.8 609.0 L845.6 610.0 L845.3 611.0 L845.1 612.0 L845.0 613.0 L844.8 614.0 L844.6 615.0 L844.5 616.0 L844.4 617.0 L844.3 618.0 L844.2 619.0 L844.1 620.0 L844.1 621.0 L844.0 622.0 L844.0 623.0 L844.0 624.0 L844.0 625.0 L844.0 626.0 L844.1 627.0 L844.1 628.0 L844.2 629.0 L844.3 630.0 L844.4 631.0 L844.6 632.0 L844.7 633.0 L844.9 634.0 L845.1 635.0 L845.3 636.0 L845.5 637.0 L845.8 638.0 L846.1 639.0 L846.3 640.0 L846.7 641.0 L847.0 642.0 L847.3 643.0 L847.7 644.0 L848.1 645.0 L848.5 646.0 L849.0 647.0 L849.4 648.0 L849.9 649.0 L850.4 650.0 L850.9 651.0 L851.5 652.0 L850.7 653.0 L849.9 654.0 L849.1 655.0 L848.4 656.0 L847.7 657.0 L847.0 658.0 L846.3 659.0 L845.7 660.0 L845.1 661.0 L844.6 662.0 L844.0 663.0 L843.5 664.0 L843.1 665.0 L842.6 666.0 L842.2 667.0 L841.8 668.0 L841.4 669.0 L841.0 670.0 L840.7 671.0 L840.4 672.0 L840.1 673.0 L839.8 674.0 L839.5 675.0 L839.3 676.0 L839.1 677.0 L838.9 678.0 L838.7 679.0 L838.6 680.0 L838.5 681.0 L838.3 682.0 L838.3 683.0 L838.2 684.0 L838.1 685.0 L838.1 686.0 L838.1 687.0 L838.1 688.0 L838.1 689.0 L838.2 690.0 L838.3 691.0 L838.4 692.0 L838.5 693.0 L838.7 694.0 L838.9 695.0 L839.1 696.0 L839.3 697.0 L839.6 698.0 L839.9 699.0 L840.2 700.0 L840.5 701.0 L840.9 702.0 L841.3 703.0 L841.7 704.0 L842.2 705.0 L842.6 706.0 L843.2 707.0 L843.7 708.0 L844.3 709.0 L844.9 710.0 L845.5 711.0 L846.2 712.0 L846.9 713.0 L847.6 714.0 L848.4 715.0 L849.2 716.0 L850.1 717.0 L851.0 718.0 L849.5 719.0 L848.6 720.0 L847.7 721.0 L846.8 722.0 L846.0 723.0 L845.3 724.0 L844.5 725.0 L843.9 726.0 L843.3 727.0 L842.7 728.0 L842.1 729.0 L841.6 730.0 L841.1 731.0 L840.7 732.0 L840.3 733.0 L839.9 734.0 L839.6 735.0 L839.3 736.0 L839.0 737.0 L838.8 738.0 L838.6 739.0 L838.4 740.0 L838.2 741.0 L838.1 742.0 L838.1 743.0 L838.0 744.0 L838.0 745.0 L838.0 746.0 L838.1 747.0 L838.2 748.0 L838.4 749.0 L838.6 750.0 L838.9 751.0 L839.2 752.0 L839.6 753.0 L840.1 754.0 L840.6 755.0 L841.1 756.0 L841.7 757.0 L842.4 758.0 L843.1 759.0 L843.9 760.0 L844.8 761.0 L845.7 762.0 L846.7 763.0 L847.8 764.0 L848.9 765.0 L850.2 766.0 L851.5 767.0 L853.0 768.0 L854.5 769.0 L856.1 770.0 L857.9 771.0 L859.8 772.0 L861.9 773.0 L864.1 774.0 L866.6 775.0 L869.3 776.0 L872.4 777.0 L875.8 778.0 L879.8 779.0 L884.6 780.0 L891.1 781.0 L907.0 782.0 L907.0 782.0 L922.9 781.0 L929.4 780.0 L934.2 779.0 L938.2 778.0 L941.6 777.0 L944.7 776.0 L947.4 775.0 L949.9 774.0 L952.1 773.0 L954.2 772.0 L956.1 771.0 L957.9 770.0 L959.5 769.0 L961.0 768.0 L962.5 767.0 L963.8 766.0 L965.1 765.0 L966.2 764.0 L967.3 763.0 L968.3 762.0 L969.2 761.0 L970.1 760.0 L970.9 759.0 L971.6 758.0 L972.3 757.0 L972.9 756.0 L973.4 755.0 L973.9 754.0 L974.4 753.0 L974.8 752.0 L975.1 751.0 L975.4 750.0 L975.6 749.0 L975.8 748.0 L975.9 747.0 L976.0 746.0 L976.0 745.0 L976.0 744.0 L975.9 743.0 L975.9 742.0 L975.8 741.0 L975.6 740.0 L975.4 739.0 L975.2 738.0 L975.0 737.0 L974.7 736.0 L974.4 735.0 L974.1 734.0 L973.7 733.0 L973.3 732.0 L972.9 731.0 L972.4 730.0 L971.9 729.0 L971.3 728.0 L970.7 727.0 L970.1 726.0 L969.5 725.0 L968.7 724.0 L968.0 723.0 L967.2 722.0 L966.3 721.0 L965.4 720.0 L964.5 719.0 L964.0 718.0 L964.9 717.0 L965.8 716.0 L966.6 715.0 L967.4 714.0 L968.1 713.0 L968.8 712.0 L969.5 711.0 L970.1 710.0 L970.7 709.0 L971.3 708.0 L971.8 707.0 L972.4 706.0 L972.8 705.0 L973.3 704.0 L973.7 703.0 L974.1 702.0 L974.5 701.0 L974.8 700.0 L975.1 699.0 L975.4 698.0 L975.7 697.0 L975.9 696.0 L976.1 695.0 L976.3 694.0 L976.5 693.0 L976.6 692.0 L976.7 691.0 L976.8 690.0 L976.9 689.0 L976.9 688.0 L976.9 687.0 L976.9 686.0 L976.9 685.0 L976.8 684.0 L976.7 683.0 L976.7 682.0 L976.5 681.0 L976.4 680.0 L976.3 679.0 L976.1 678.0 L975.9 677.0 L975.7 676.0 L975.5 675.0 L975.2 674.0 L974.9 673.0 L974.6 672.0 L974.3 671.0 L974.0 670.0 L973.6 669.0 L973.2 668.0 L972.8 667.0 L972.4 666.0 L971.9 665.0 L971.5 664.0 L971.0 663.0 L970.4 662.0 L969.9 661.0 L969.3 660.0 L968.7 659.0 L968.0 658.0 L967.3 657.0 L966.6 656.0 L965.9 655.0 L965.1 654.0 L964.3 653.0 L963.5 652.0 L964.1 651.0 L964.6 650.0 L965.1 649.0 L965.6 648.0 L966.0 647.0 L966.5 646.0 L966.9 645.0 L967.3 644.0 L967.7 643.0 L968.0 642.0 L968.3 641.0 L968.7 640.0 L968.9 639.0 L969.2 638.0 L969.5 637.0 L969.7 636.0 L969.9 635.0 L970.1 634.0 L970.3 633.0 L970.4 632.0 L970.6 631.0 L970.7 630.0 L970.8 629.0 L970.9 628.0 L970.9 627.0 L971.0 626.0 L971.0 625.0 L971.0 624.0 L971.0 623.0 L971.0 622.0 L970.9 621.0 L970.9 620.0 L970.8 619.0 L970.7 618.0 L970.6 617.0 L970.5 616.0 L970.4 615.0 L970.2 614.0 L970.0 613.0 L969.9 612.0 L969.7 611.0 L969.4 610.0 L969.2 609.0 L969.0 608.0 L968.7 607.0 L968.4 606.0 L968.1 605.0 L967.8 604.0 L967.4 603.0 L967.1 602.0 L966.7 601.0 L966.3 600.0 L965.9 599.0 L965.5 598.0 L965.0 597.0 L964.5 596.0 L964.0 595.0 L963.5 594.0 L964.3 593.0 L965.1 592.0 L965.9 591.0 L966.6 590.0 L967.3 589.0 L968.0 588.0 L968.6 587.0 L969.2 586.0 L969.8 585.0 L970.4 584.0 L970.9 583.0 L971.4 582.0 L971.9 581.0 L972.3 580.0 L972.7 579.0 L973.1 578.0 L973.5 577.0 L973.8 576.0 L974.2 575.0 L974.5 574.0 L974.8 573.0 L975.0 572.0 L975.3 571.0 L975.5 570.0 L975.7 569.0 L975.8 568.0 L976.0 567.0 L976.1 566.0 L976.2 565.0 L976.3 564.0 L976.4 563.0 L976.5 562.0 L976.5 561.0 L976.5 560.0 L976.5 559.0 L976.5 558.0 L976.5 557.0 L976.4 556.0 L976.4 555.0 L976.4 554.0 L976.3 553.0 L976.3 552.0 L976.2 551.0 L976.1 550.0 L976.1 549.0 L976.0 548.0 L975.9 547.0 L975.8 546.0 L975.7 545.0 L975.6 544.0 L975.5 543.0 L975.3 542.0 L975.2 541.0 L975.0 540.0 L974.9 539.0 L974.7 538.0 L974.6 537.0 L974.4 536.0 L974.2 535.0 L974.0 534.0 L973.8 533.0 L973.6 532.0 L973.4 531.0 L973.2 530.0 L973.0 529.0 L972.7 528.0 L972.5 527.0 L972.2 526.0 L972.0 525.0 L971.7 524.0 L971.4 523.0 L971.1 522.0 L970.8 521.0 L970.5 520.0z" fill="url(#mcol)"/>
<clipPath id="colclip"><path d="M844.5 520.0 L844.2 521.0 L843.9 522.0 L843.6 523.0 L843.3 524.0 L843.0 525.0 L842.8 526.0 L842.5 527.0 L842.3 528.0 L842.0 529.0 L841.8 530.0 L841.6 531.0 L841.4 532.0 L841.2 533.0 L841.0 534.0 L840.8 535.0 L840.6 536.0 L840.4 537.0 L840.3 538.0 L840.1 539.0 L840.0 540.0 L839.8 541.0 L839.7 542.0 L839.5 543.0 L839.4 544.0 L839.3 545.0 L839.2 546.0 L839.1 547.0 L839.0 548.0 L838.9 549.0 L838.9 550.0 L838.8 551.0 L838.7 552.0 L838.7 553.0 L838.6 554.0 L838.6 555.0 L838.6 556.0 L838.5 557.0 L838.5 558.0 L838.5 559.0 L838.5 560.0 L838.5 561.0 L838.5 562.0 L838.6 563.0 L838.7 564.0 L838.8 565.0 L838.9 566.0 L839.0 567.0 L839.2 568.0 L839.3 569.0 L839.5 570.0 L839.7 571.0 L840.0 572.0 L840.2 573.0 L840.5 574.0 L840.8 575.0 L841.2 576.0 L841.5 577.0 L841.9 578.0 L842.3 579.0 L842.7 580.0 L843.1 581.0 L843.6 582.0 L844.1 583.0 L844.6 584.0 L845.2 585.0 L845.8 586.0 L846.4 587.0 L847.0 588.0 L847.7 589.0 L848.4 590.0 L849.1 591.0 L849.9 592.0 L850.7 593.0 L851.5 594.0 L851.0 595.0 L850.5 596.0 L850.0 597.0 L849.5 598.0 L849.1 599.0 L848.7 600.0 L848.3 601.0 L847.9 602.0 L847.6 603.0 L847.2 604.0 L846.9 605.0 L846.6 606.0 L846.3 607.0 L846.0 608.0 L845.8 609.0 L845.6 610.0 L845.3 611.0 L845.1 612.0 L845.0 613.0 L844.8 614.0 L844.6 615.0 L844.5 616.0 L844.4 617.0 L844.3 618.0 L844.2 619.0 L844.1 620.0 L844.1 621.0 L844.0 622.0 L844.0 623.0 L844.0 624.0 L844.0 625.0 L844.0 626.0 L844.1 627.0 L844.1 628.0 L844.2 629.0 L844.3 630.0 L844.4 631.0 L844.6 632.0 L844.7 633.0 L844.9 634.0 L845.1 635.0 L845.3 636.0 L845.5 637.0 L845.8 638.0 L846.1 639.0 L846.3 640.0 L846.7 641.0 L847.0 642.0 L847.3 643.0 L847.7 644.0 L848.1 645.0 L848.5 646.0 L849.0 647.0 L849.4 648.0 L849.9 649.0 L850.4 650.0 L850.9 651.0 L851.5 652.0 L850.7 653.0 L849.9 654.0 L849.1 655.0 L848.4 656.0 L847.7 657.0 L847.0 658.0 L846.3 659.0 L845.7 660.0 L845.1 661.0 L844.6 662.0 L844.0 663.0 L843.5 664.0 L843.1 665.0 L842.6 666.0 L842.2 667.0 L841.8 668.0 L841.4 669.0 L841.0 670.0 L840.7 671.0 L840.4 672.0 L840.1 673.0 L839.8 674.0 L839.5 675.0 L839.3 676.0 L839.1 677.0 L838.9 678.0 L838.7 679.0 L838.6 680.0 L838.5 681.0 L838.3 682.0 L838.3 683.0 L838.2 684.0 L838.1 685.0 L838.1 686.0 L838.1 687.0 L838.1 688.0 L838.1 689.0 L838.2 690.0 L838.3 691.0 L838.4 692.0 L838.5 693.0 L838.7 694.0 L838.9 695.0 L839.1 696.0 L839.3 697.0 L839.6 698.0 L839.9 699.0 L840.2 700.0 L840.5 701.0 L840.9 702.0 L841.3 703.0 L841.7 704.0 L842.2 705.0 L842.6 706.0 L843.2 707.0 L843.7 708.0 L844.3 709.0 L844.9 710.0 L845.5 711.0 L846.2 712.0 L846.9 713.0 L847.6 714.0 L848.4 715.0 L849.2 716.0 L850.1 717.0 L851.0 718.0 L849.5 719.0 L848.6 720.0 L847.7 721.0 L846.8 722.0 L846.0 723.0 L845.3 724.0 L844.5 725.0 L843.9 726.0 L843.3 727.0 L842.7 728.0 L842.1 729.0 L841.6 730.0 L841.1 731.0 L840.7 732.0 L840.3 733.0 L839.9 734.0 L839.6 735.0 L839.3 736.0 L839.0 737.0 L838.8 738.0 L838.6 739.0 L838.4 740.0 L838.2 741.0 L838.1 742.0 L838.1 743.0 L838.0 744.0 L838.0 745.0 L838.0 746.0 L838.1 747.0 L838.2 748.0 L838.4 749.0 L838.6 750.0 L838.9 751.0 L839.2 752.0 L839.6 753.0 L840.1 754.0 L840.6 755.0 L841.1 756.0 L841.7 757.0 L842.4 758.0 L843.1 759.0 L843.9 760.0 L844.8 761.0 L845.7 762.0 L846.7 763.0 L847.8 764.0 L848.9 765.0 L850.2 766.0 L851.5 767.0 L853.0 768.0 L854.5 769.0 L856.1 770.0 L857.9 771.0 L859.8 772.0 L861.9 773.0 L864.1 774.0 L866.6 775.0 L869.3 776.0 L872.4 777.0 L875.8 778.0 L879.8 779.0 L884.6 780.0 L891.1 781.0 L907.0 782.0 L907.0 782.0 L922.9 781.0 L929.4 780.0 L934.2 779.0 L938.2 778.0 L941.6 777.0 L944.7 776.0 L947.4 775.0 L949.9 774.0 L952.1 773.0 L954.2 772.0 L956.1 771.0 L957.9 770.0 L959.5 769.0 L961.0 768.0 L962.5 767.0 L963.8 766.0 L965.1 765.0 L966.2 764.0 L967.3 763.0 L968.3 762.0 L969.2 761.0 L970.1 760.0 L970.9 759.0 L971.6 758.0 L972.3 757.0 L972.9 756.0 L973.4 755.0 L973.9 754.0 L974.4 753.0 L974.8 752.0 L975.1 751.0 L975.4 750.0 L975.6 749.0 L975.8 748.0 L975.9 747.0 L976.0 746.0 L976.0 745.0 L976.0 744.0 L975.9 743.0 L975.9 742.0 L975.8 741.0 L975.6 740.0 L975.4 739.0 L975.2 738.0 L975.0 737.0 L974.7 736.0 L974.4 735.0 L974.1 734.0 L973.7 733.0 L973.3 732.0 L972.9 731.0 L972.4 730.0 L971.9 729.0 L971.3 728.0 L970.7 727.0 L970.1 726.0 L969.5 725.0 L968.7 724.0 L968.0 723.0 L967.2 722.0 L966.3 721.0 L965.4 720.0 L964.5 719.0 L964.0 718.0 L964.9 717.0 L965.8 716.0 L966.6 715.0 L967.4 714.0 L968.1 713.0 L968.8 712.0 L969.5 711.0 L970.1 710.0 L970.7 709.0 L971.3 708.0 L971.8 707.0 L972.4 706.0 L972.8 705.0 L973.3 704.0 L973.7 703.0 L974.1 702.0 L974.5 701.0 L974.8 700.0 L975.1 699.0 L975.4 698.0 L975.7 697.0 L975.9 696.0 L976.1 695.0 L976.3 694.0 L976.5 693.0 L976.6 692.0 L976.7 691.0 L976.8 690.0 L976.9 689.0 L976.9 688.0 L976.9 687.0 L976.9 686.0 L976.9 685.0 L976.8 684.0 L976.7 683.0 L976.7 682.0 L976.5 681.0 L976.4 680.0 L976.3 679.0 L976.1 678.0 L975.9 677.0 L975.7 676.0 L975.5 675.0 L975.2 674.0 L974.9 673.0 L974.6 672.0 L974.3 671.0 L974.0 670.0 L973.6 669.0 L973.2 668.0 L972.8 667.0 L972.4 666.0 L971.9 665.0 L971.5 664.0 L971.0 663.0 L970.4 662.0 L969.9 661.0 L969.3 660.0 L968.7 659.0 L968.0 658.0 L967.3 657.0 L966.6 656.0 L965.9 655.0 L965.1 654.0 L964.3 653.0 L963.5 652.0 L964.1 651.0 L964.6 650.0 L965.1 649.0 L965.6 648.0 L966.0 647.0 L966.5 646.0 L966.9 645.0 L967.3 644.0 L967.7 643.0 L968.0 642.0 L968.3 641.0 L968.7 640.0 L968.9 639.0 L969.2 638.0 L969.5 637.0 L969.7 636.0 L969.9 635.0 L970.1 634.0 L970.3 633.0 L970.4 632.0 L970.6 631.0 L970.7 630.0 L970.8 629.0 L970.9 628.0 L970.9 627.0 L971.0 626.0 L971.0 625.0 L971.0 624.0 L971.0 623.0 L971.0 622.0 L970.9 621.0 L970.9 620.0 L970.8 619.0 L970.7 618.0 L970.6 617.0 L970.5 616.0 L970.4 615.0 L970.2 614.0 L970.0 613.0 L969.9 612.0 L969.7 611.0 L969.4 610.0 L969.2 609.0 L969.0 608.0 L968.7 607.0 L968.4 606.0 L968.1 605.0 L967.8 604.0 L967.4 603.0 L967.1 602.0 L966.7 601.0 L966.3 600.0 L965.9 599.0 L965.5 598.0 L965.0 597.0 L964.5 596.0 L964.0 595.0 L963.5 594.0 L964.3 593.0 L965.1 592.0 L965.9 591.0 L966.6 590.0 L967.3 589.0 L968.0 588.0 L968.6 587.0 L969.2 586.0 L969.8 585.0 L970.4 584.0 L970.9 583.0 L971.4 582.0 L971.9 581.0 L972.3 580.0 L972.7 579.0 L973.1 578.0 L973.5 577.0 L973.8 576.0 L974.2 575.0 L974.5 574.0 L974.8 573.0 L975.0 572.0 L975.3 571.0 L975.5 570.0 L975.7 569.0 L975.8 568.0 L976.0 567.0 L976.1 566.0 L976.2 565.0 L976.3 564.0 L976.4 563.0 L976.5 562.0 L976.5 561.0 L976.5 560.0 L976.5 559.0 L976.5 558.0 L976.5 557.0 L976.4 556.0 L976.4 555.0 L976.4 554.0 L976.3 553.0 L976.3 552.0 L976.2 551.0 L976.1 550.0 L976.1 549.0 L976.0 548.0 L975.9 547.0 L975.8 546.0 L975.7 545.0 L975.6 544.0 L975.5 543.0 L975.3 542.0 L975.2 541.0 L975.0 540.0 L974.9 539.0 L974.7 538.0 L974.6 537.0 L974.4 536.0 L974.2 535.0 L974.0 534.0 L973.8 533.0 L973.6 532.0 L973.4 531.0 L973.2 530.0 L973.0 529.0 L972.7 528.0 L972.5 527.0 L972.2 526.0 L972.0 525.0 L971.7 524.0 L971.4 523.0 L971.1 522.0 L970.8 521.0 L970.5 520.0z"/></clipPath>
<g clip-path="url(#colclip)">
<linearGradient id="bg0" x1="0" y1="520.0" x2="0" y2="594.0" gradientUnits="userSpaceOnUse"><stop offset="0" stop-color="#272520" stop-opacity="0.35"/><stop offset="0.22" stop-color="#fff" stop-opacity="0"/><stop offset="0.42" stop-color="#d7d1bf" stop-opacity="0.28"/><stop offset="0.62" stop-color="#fff" stop-opacity="0"/><stop offset="1" stop-color="#1f1e1a" stop-opacity="0.4"/></linearGradient>
<rect x="830" y="520.0" width="150" height="74.0" fill="url(#bg0)"/>
<ellipse cx="895.5" cy="551.1" rx="24.1" ry="7.4" fill="#bab5a5" opacity="0.35" filter="url(#mblur)"/>
<linearGradient id="bg1" x1="0" y1="594.0" x2="0" y2="652.0" gradientUnits="userSpaceOnUse"><stop offset="0" stop-color="#272520" stop-opacity="0.35"/><stop offset="0.22" stop-color="#fff" stop-opacity="0"/><stop offset="0.42" stop-color="#d7d1bf" stop-opacity="0.28"/><stop offset="0.62" stop-color="#fff" stop-opacity="0"/><stop offset="1" stop-color="#1f1e1a" stop-opacity="0.4"/></linearGradient>
<rect x="830" y="594.0" width="150" height="58.0" fill="url(#bg1)"/>
<ellipse cx="895.5" cy="618.4" rx="22.2" ry="5.8" fill="#bab5a5" opacity="0.35" filter="url(#mblur)"/>
<linearGradient id="bg2" x1="0" y1="652.0" x2="0" y2="718.0" gradientUnits="userSpaceOnUse"><stop offset="0" stop-color="#272520" stop-opacity="0.35"/><stop offset="0.22" stop-color="#fff" stop-opacity="0"/><stop offset="0.42" stop-color="#d7d1bf" stop-opacity="0.28"/><stop offset="0.62" stop-color="#fff" stop-opacity="0"/><stop offset="1" stop-color="#1f1e1a" stop-opacity="0.4"/></linearGradient>
<rect x="830" y="652.0" width="150" height="66.0" fill="url(#bg2)"/>
<ellipse cx="895.5" cy="679.7" rx="24.3" ry="6.6" fill="#bab5a5" opacity="0.35" filter="url(#mblur)"/>
<linearGradient id="bg3" x1="0" y1="718.0" x2="0" y2="782.0" gradientUnits="userSpaceOnUse"><stop offset="0" stop-color="#272520" stop-opacity="0.35"/><stop offset="0.22" stop-color="#fff" stop-opacity="0"/><stop offset="0.42" stop-color="#d7d1bf" stop-opacity="0.28"/><stop offset="0.62" stop-color="#fff" stop-opacity="0"/><stop offset="1" stop-color="#1f1e1a" stop-opacity="0.4"/></linearGradient>
<rect x="830" y="718.0" width="150" height="64.0" fill="url(#bg3)"/>
<ellipse cx="895.0" cy="744.9" rx="24.1" ry="6.4" fill="#bab5a5" opacity="0.35" filter="url(#mblur)"/>
</g>
<ellipse cx="907.5" cy="622.5" rx="61" ry="23.75" fill="none" stroke="#272622" stroke-width="0.9"/>
<path d="M857.5 650Q880 667.5 907.5 667.5Q935 667.5 962.5 650" fill="none" stroke="#272622" stroke-width="0.9"/>
<ellipse cx="907.25" cy="753.75" rx="68.75" ry="28.75" fill="none" stroke="#272622" stroke-width="0.9"/>
<ellipse cx="907" cy="676" rx="65" ry="20" fill="none" stroke="#35332e" stroke-width="0.5" opacity="0.55"/>
<ellipse cx="907" cy="680" rx="66" ry="22" fill="none" stroke="#35332e" stroke-width="0.5" opacity="0.55"/>
<ellipse cx="907" cy="684" rx="66" ry="23" fill="none" stroke="#35332e" stroke-width="0.5" opacity="0.55"/>
<ellipse cx="907" cy="690" rx="65" ry="22" fill="none" stroke="#35332e" stroke-width="0.5" opacity="0.55"/>
<ellipse cx="907" cy="705" rx="62" ry="20" fill="none" stroke="#35332e" stroke-width="0.5" opacity="0.55"/>
<ellipse cx="907" cy="598" rx="62" ry="22" fill="none" stroke="#35332e" stroke-width="0.5" opacity="0.55"/>
<path d="M851.6 458.1 C854.5 454.7 855.1 454.4 859.4 453.2 C863.7 451.9 872.3 450.8 877.2 450.6 C882.1 450.4 883.9 452.1 889.0 452.2 C894.1 452.3 901.8 451.0 908.0 451.0 C914.2 451.0 921.5 451.5 926.5 452.2 C931.5 452.9 935.0 454.2 938.3 455.2 C941.6 456.2 942.9 456.3 946.2 458.1 C949.5 459.9 954.7 463.4 958.0 466.0 C961.3 468.6 963.7 470.3 966.0 473.9 C968.3 477.5 970.6 483.1 971.9 487.7 C973.2 492.3 973.8 496.6 973.8 501.5 C973.8 506.4 973.2 512.4 971.9 517.3 C970.6 522.2 968.3 527.5 966.0 531.1 C963.7 534.7 961.3 536.4 958.0 539.0 C954.7 541.6 950.8 544.6 946.2 546.9 C941.6 549.2 936.1 550.8 930.5 552.8 C924.9 554.8 918.0 557.7 912.7 558.7 C907.4 559.8 903.5 560.1 898.9 559.1 C894.3 558.1 890.0 555.5 885.1 552.8 C880.2 550.1 873.6 544.2 869.3 542.9 C865.0 541.6 862.7 544.6 859.4 544.9 C856.1 545.2 851.6 546.9 849.6 544.9 C847.6 542.9 848.6 538.3 847.6 533.0 C846.6 527.7 845.2 519.2 843.7 513.3 C842.2 507.4 839.7 502.5 838.7 497.6 C837.7 492.7 837.3 487.8 837.8 483.8 C838.3 479.9 839.4 478.2 841.7 473.9 C844.0 469.6 848.7 461.6 851.6 458.1z" fill="url(#mwax)"/>
<clipPath id="waxclip"><path d="M851.6 458.1 C854.5 454.7 855.1 454.4 859.4 453.2 C863.7 451.9 872.3 450.8 877.2 450.6 C882.1 450.4 883.9 452.1 889.0 452.2 C894.1 452.3 901.8 451.0 908.0 451.0 C914.2 451.0 921.5 451.5 926.5 452.2 C931.5 452.9 935.0 454.2 938.3 455.2 C941.6 456.2 942.9 456.3 946.2 458.1 C949.5 459.9 954.7 463.4 958.0 466.0 C961.3 468.6 963.7 470.3 966.0 473.9 C968.3 477.5 970.6 483.1 971.9 487.7 C973.2 492.3 973.8 496.6 973.8 501.5 C973.8 506.4 973.2 512.4 971.9 517.3 C970.6 522.2 968.3 527.5 966.0 531.1 C963.7 534.7 961.3 536.4 958.0 539.0 C954.7 541.6 950.8 544.6 946.2 546.9 C941.6 549.2 936.1 550.8 930.5 552.8 C924.9 554.8 918.0 557.7 912.7 558.7 C907.4 559.8 903.5 560.1 898.9 559.1 C894.3 558.1 890.0 555.5 885.1 552.8 C880.2 550.1 873.6 544.2 869.3 542.9 C865.0 541.6 862.7 544.6 859.4 544.9 C856.1 545.2 851.6 546.9 849.6 544.9 C847.6 542.9 848.6 538.3 847.6 533.0 C846.6 527.7 845.2 519.2 843.7 513.3 C842.2 507.4 839.7 502.5 838.7 497.6 C837.7 492.7 837.3 487.8 837.8 483.8 C838.3 479.9 839.4 478.2 841.7 473.9 C844.0 469.6 848.7 461.6 851.6 458.1z"/></clipPath>
<g clip-path="url(#waxclip)">
<ellipse cx="908" cy="488" rx="40" ry="18" fill="#47453d" opacity="0.45" filter="url(#mblur2)"/>
<path d="M870 470Q890 462 915 466" fill="none" stroke="#c8c2b1" stroke-width="3" opacity="0.5" filter="url(#mblur2)"/>
<path d="M930 500Q950 495 962 480" fill="none" stroke="#c8c2b1" stroke-width="3" opacity="0.45" filter="url(#mblur2)"/>
<path d="M846 512Q880 528 930 526Q958 520 972 505" fill="none" stroke="#b4ae9e" stroke-width="3.5" opacity="0.55" filter="url(#mblur2)"/>
<path d="M856 486Q846 498 853 510" fill="none" stroke="#d5cfbd" stroke-width="2.5" opacity="0.85" filter="url(#mblur2)"/>
<path d="M895 512Q918 506 940 508" fill="none" stroke="#d5cfbd" stroke-width="2" opacity="0.8" filter="url(#mblur2)"/>
<path d="M880 538Q905 548 945 536" fill="none" stroke="#a39e8f" stroke-width="3" opacity="0.45" filter="url(#mblur2)"/>
</g>
<clipPath id="waxclip2"><path d="M851.6 458.1 C854.5 454.7 855.1 454.4 859.4 453.2 C863.7 451.9 872.3 450.8 877.2 450.6 C882.1 450.4 883.9 452.1 889.0 452.2 C894.1 452.3 901.8 451.0 908.0 451.0 C914.2 451.0 921.5 451.5 926.5 452.2 C931.5 452.9 935.0 454.2 938.3 455.2 C941.6 456.2 942.9 456.3 946.2 458.1 C949.5 459.9 954.7 463.4 958.0 466.0 C961.3 468.6 963.7 470.3 966.0 473.9 C968.3 477.5 970.6 483.1 971.9 487.7 C973.2 492.3 973.8 496.6 973.8 501.5 C973.8 506.4 973.2 512.4 971.9 517.3 C970.6 522.2 968.3 527.5 966.0 531.1 C963.7 534.7 961.3 536.4 958.0 539.0 C954.7 541.6 950.8 544.6 946.2 546.9 C941.6 549.2 936.1 550.8 930.5 552.8 C924.9 554.8 918.0 557.7 912.7 558.7 C907.4 559.8 903.5 560.1 898.9 559.1 C894.3 558.1 890.0 555.5 885.1 552.8 C880.2 550.1 873.6 544.2 869.3 542.9 C865.0 541.6 862.7 544.6 859.4 544.9 C856.1 545.2 851.6 546.9 849.6 544.9 C847.6 542.9 848.6 538.3 847.6 533.0 C846.6 527.7 845.2 519.2 843.7 513.3 C842.2 507.4 839.7 502.5 838.7 497.6 C837.7 492.7 837.3 487.8 837.8 483.8 C838.3 479.9 839.4 478.2 841.7 473.9 C844.0 469.6 848.7 461.6 851.6 458.1z" transform="translate(906 505) scale(1.012) translate(-906 -505)"/></clipPath>
<g stroke="#0e0e0e" stroke-width="0.5" fill="none" opacity="0.85" clip-path="url(#waxclip2)">
<path d="M910.9 483.3Q950.8 484.3 993.8 491.3"/>
<path d="M910.9 483.4Q952.8 488.3 995.0 499.2"/>
<path d="M910.8 483.5Q951.6 492.0 990.4 506.7"/>
<path d="M910.6 483.6Q947.4 495.0 981.0 512.7"/>
<path d="M910.3 483.7Q941.6 497.2 969.6 517.1"/>
<path d="M910.0 483.7Q935.6 499.0 959.1 520.7"/>
<path d="M909.7 483.8Q930.0 501.1 950.2 524.8"/>
<path d="M909.3 483.8Q924.5 503.6 942.1 529.9"/>
<path d="M908.8 483.9Q918.5 506.2 932.7 535.1"/>
<path d="M908.4 483.9Q911.8 508.1 921.0 539.0"/>
<path d="M907.9 483.9Q904.9 508.7 907.9 540.1"/>
<path d="M907.4 483.9Q898.7 507.9 894.9 538.5"/>
<path d="M907.0 483.9Q893.8 506.1 883.2 535.0"/>
<path d="M906.5 483.8Q889.8 504.2 872.6 531.2"/>
<path d="M906.1 483.8Q885.9 502.5 862.0 527.6"/>
<path d="M905.8 483.7Q881.5 500.7 850.8 524.1"/>
<path d="M905.5 483.7Q876.9 498.4 840.2 519.6"/>
<path d="M905.2 483.6Q873.1 495.4 832.3 513.5"/>
<path d="M905.0 483.5Q870.8 491.7 828.9 506.1"/>
<path d="M904.9 483.4Q870.4 487.8 830.1 498.4"/>
<path d="M904.9 483.3Q870.8 484.3 833.8 491.3"/>
<path d="M904.9 483.2Q871.1 481.1 837.0 484.8"/>
<path d="M905.0 483.1Q870.7 477.8 838.3 478.3"/>
<path d="M905.2 483.0Q870.2 474.1 838.5 471.0"/>
<path d="M905.5 482.9Q871.2 470.2 840.2 463.0"/>
<path d="M905.8 482.9Q874.8 466.5 845.9 455.7"/>
<path d="M906.1 482.8Q881.1 463.8 856.2 450.4"/>
<path d="M906.5 482.8Q889.1 462.6 869.4 447.9"/>
<path d="M907.0 482.7Q897.3 462.5 883.2 447.6"/>
<path d="M907.4 482.7Q904.6 462.7 896.0 448.1"/>
<path d="M907.9 482.7Q910.9 462.7 907.9 448.1"/>
<path d="M908.4 482.7Q916.6 462.4 919.9 447.6"/>
<path d="M908.8 482.7Q922.0 462.4 932.7 447.5"/>
<path d="M909.3 482.8Q927.0 463.2 945.2 449.2"/>
<path d="M909.7 482.8Q931.0 465.3 956.0 453.2"/>
<path d="M910.0 482.9Q933.8 468.2 964.0 459.1"/>
<path d="M910.3 482.9Q935.9 471.4 969.6 465.5"/>
<path d="M910.6 483.0Q938.4 474.5 974.8 471.7"/>
<path d="M910.8 483.1Q942.1 477.5 981.1 477.6"/>
<path d="M910.9 483.2Q946.7 480.6 988.2 484.0"/>
<path d="M928.5 486.8 C929.4 487.4 930.6 488.0 930.8 488.4 C930.9 488.8 930.4 489.1 929.5 489.3 C928.5 489.5 926.6 489.5 925.1 489.6 C923.6 489.6 921.7 489.6 920.6 489.7 C919.5 489.8 918.9 489.9 918.6 490.2 C918.3 490.5 918.8 491.0 918.7 491.6 C918.7 492.2 918.9 493.1 918.3 493.9 C917.7 494.7 916.5 495.7 915.1 496.4 C913.8 497.2 911.6 497.9 910.1 498.4 C908.5 498.8 906.7 499.1 905.7 499.1 C904.7 499.0 904.2 498.7 903.8 498.3 C903.4 497.8 903.6 497.1 903.3 496.4 C902.9 495.7 902.5 494.9 901.6 494.2 C900.6 493.5 899.0 492.8 897.6 492.3 C896.1 491.8 894.0 491.4 892.7 491.0 C891.3 490.7 890.1 490.5 889.6 490.3 C889.0 490.1 889.2 489.9 889.4 489.7 C889.6 489.6 890.4 489.4 890.7 489.1 C891.0 488.9 891.3 488.6 891.2 488.2 C891.1 487.8 890.5 487.4 890.1 486.8 C889.7 486.2 889.0 485.6 888.9 484.8 C888.8 484.0 889.0 483.1 889.4 482.2 C889.9 481.2 890.9 480.1 891.6 479.1 C892.3 478.1 893.2 477.0 893.7 476.1 C894.2 475.2 894.4 474.4 894.6 473.9 C894.8 473.3 894.5 473.0 894.8 472.9 C895.1 472.8 895.5 473.0 896.5 473.3 C897.5 473.5 899.1 474.1 900.7 474.4 C902.3 474.8 904.5 475.3 906.0 475.6 C907.6 475.8 909.1 476.0 910.1 476.0 C911.1 475.9 911.4 475.7 911.8 475.4 C912.2 475.2 912.1 474.7 912.5 474.4 C913.0 474.1 913.6 473.7 914.7 473.6 C915.7 473.5 917.4 473.4 918.8 473.6 C920.1 473.8 921.9 474.2 922.9 474.7 C923.9 475.2 924.6 475.9 924.8 476.7 C925.0 477.5 924.5 478.4 924.3 479.3 C924.1 480.1 923.5 481.1 923.7 482.0 C923.8 482.9 924.4 483.8 925.2 484.6 C926.0 485.4 927.6 486.2 928.5 486.8z" stroke-width="0.50"/>
<path d="M947.5 487.1 C948.4 487.8 948.7 488.4 948.1 489.1 C947.6 489.7 945.8 490.3 944.1 490.9 C942.4 491.5 939.9 492.0 938.1 492.6 C936.3 493.2 934.6 493.7 933.4 494.4 C932.2 495.0 931.7 495.7 930.9 496.6 C930.1 497.4 929.7 498.4 928.7 499.4 C927.6 500.4 926.2 501.6 924.4 502.5 C922.6 503.5 920.1 504.6 918.0 505.3 C915.8 506.0 913.4 506.5 911.5 506.7 C909.6 506.9 908.1 506.8 906.7 506.4 C905.3 506.0 904.5 505.3 903.3 504.5 C902.0 503.8 900.9 502.8 899.2 502.0 C897.6 501.2 895.4 500.4 893.2 499.8 C891.1 499.3 888.4 498.8 886.3 498.5 C884.2 498.2 882.1 498.1 880.6 497.9 C879.2 497.7 878.3 497.6 877.6 497.3 C876.8 497.0 876.7 496.6 876.3 496.1 C875.9 495.5 875.6 494.7 875.2 493.8 C874.8 492.9 874.2 491.8 873.9 490.7 C873.6 489.6 873.3 488.4 873.4 487.1 C873.6 485.9 874.1 484.6 874.8 483.4 C875.5 482.1 876.6 480.9 877.4 479.7 C878.2 478.4 879.0 477.2 879.4 476.1 C879.8 475.0 879.7 473.9 879.8 473.0 C880.0 472.2 879.6 471.4 880.2 470.9 C880.7 470.4 881.5 470.1 883.0 470.0 C884.6 469.9 887.0 470.1 889.5 470.2 C892.0 470.3 895.3 470.6 897.8 470.7 C900.4 470.9 903.0 471.0 904.9 470.9 C906.7 470.8 907.9 470.5 909.1 470.1 C910.3 469.7 910.8 469.1 912.1 468.7 C913.3 468.3 914.7 467.7 916.6 467.5 C918.5 467.3 921.1 467.2 923.4 467.5 C925.8 467.8 928.6 468.4 930.5 469.2 C932.3 470.0 933.9 471.1 934.7 472.2 C935.6 473.4 935.5 474.8 935.6 476.0 C935.8 477.2 935.3 478.5 935.7 479.6 C936.1 480.7 936.8 481.7 938.1 482.6 C939.3 483.5 941.4 484.3 943.0 485.0 C944.6 485.8 946.7 486.5 947.5 487.1z" stroke-width="0.50"/>
<path d="M964.9 486.5 C965.3 487.6 964.8 488.8 963.8 490.1 C962.8 491.4 960.6 492.8 958.8 494.2 C957.0 495.5 954.7 496.9 952.9 498.1 C951.0 499.4 949.4 500.6 947.7 501.7 C946.0 502.9 944.6 503.9 942.7 505.0 C940.9 506.1 938.9 507.2 936.6 508.3 C934.4 509.3 931.7 510.5 929.2 511.4 C926.7 512.4 924.0 513.3 921.6 513.9 C919.2 514.5 917.1 515.0 914.9 515.0 C912.8 515.1 911.0 514.9 908.8 514.5 C906.6 514.1 904.4 513.3 901.8 512.6 C899.2 511.9 896.1 511.0 893.2 510.4 C890.2 509.7 886.9 509.1 884.1 508.7 C881.3 508.3 878.6 508.1 876.3 507.8 C874.1 507.5 872.3 507.4 870.6 507.0 C868.9 506.5 867.6 506.1 866.1 505.3 C864.6 504.4 863.0 503.3 861.6 502.0 C860.2 500.7 858.7 498.9 857.8 497.2 C856.9 495.5 856.3 493.6 856.4 491.8 C856.5 490.0 857.5 488.1 858.5 486.5 C859.5 484.8 861.3 483.3 862.4 481.9 C863.6 480.4 864.8 479.1 865.3 477.8 C865.7 476.6 865.5 475.3 865.3 474.2 C865.1 473.0 864.2 471.8 864.3 470.7 C864.5 469.6 864.7 468.5 866.2 467.7 C867.7 466.8 870.2 466.1 873.2 465.6 C876.1 465.0 880.4 464.7 883.9 464.4 C887.4 464.1 891.3 463.9 894.3 463.7 C897.2 463.4 899.5 463.2 901.6 462.9 C903.8 462.6 905.0 462.1 907.0 461.7 C908.9 461.3 910.8 460.7 913.4 460.5 C916.0 460.2 919.4 460.0 922.7 460.2 C925.9 460.4 930.0 460.8 933.0 461.7 C936.0 462.5 939.0 463.7 940.9 465.0 C942.8 466.4 943.7 468.1 944.6 469.6 C945.4 471.2 945.3 472.8 945.9 474.2 C946.6 475.6 947.2 476.9 948.6 478.0 C950.0 479.1 952.2 480.0 954.3 480.9 C956.4 481.8 959.2 482.6 961.0 483.5 C962.8 484.4 964.4 485.4 964.9 486.5z" stroke-width="0.50"/>
<path d="M976.9 486.3 C977.2 488.1 976.6 490.2 975.8 492.2 C975.0 494.3 973.6 496.5 972.0 498.5 C970.4 500.4 968.6 502.4 966.4 504.0 C964.3 505.6 961.9 507.0 959.3 508.2 C956.6 509.5 953.6 510.4 950.6 511.4 C947.6 512.4 944.3 513.2 941.4 514.1 C938.5 515.0 935.7 516.0 933.1 516.8 C930.6 517.7 928.5 518.7 926.2 519.4 C923.8 520.1 921.8 520.7 919.1 521.1 C916.4 521.4 913.5 521.5 910.1 521.3 C906.7 521.2 902.6 520.8 898.8 520.4 C894.9 519.9 890.7 519.3 887.1 518.8 C883.6 518.2 880.3 517.7 877.4 517.2 C874.6 516.7 872.5 516.4 870.2 515.8 C867.9 515.2 866.0 514.7 863.6 513.8 C861.2 512.9 858.5 511.8 855.9 510.4 C853.3 508.9 850.2 507.0 848.0 505.1 C845.9 503.1 843.9 500.7 843.1 498.5 C842.4 496.4 842.8 494.0 843.6 491.9 C844.5 489.9 846.7 488.0 848.3 486.3 C849.9 484.6 852.0 483.3 853.0 481.9 C854.0 480.5 854.3 479.4 854.1 478.1 C854.0 476.8 852.7 475.5 852.3 474.1 C851.9 472.6 851.1 471.0 851.8 469.4 C852.5 467.9 854.0 466.2 856.6 464.7 C859.1 463.3 863.1 461.8 866.9 460.7 C870.7 459.6 875.4 458.7 879.2 458.0 C883.0 457.4 886.6 457.0 889.7 456.6 C892.8 456.2 895.0 456.1 897.7 455.9 C900.3 455.7 902.6 455.5 905.7 455.3 C908.8 455.2 912.4 455.1 916.3 455.2 C920.1 455.3 924.8 455.5 928.7 456.0 C932.7 456.5 936.9 457.4 940.0 458.4 C943.1 459.5 945.5 461.0 947.4 462.4 C949.3 463.9 950.2 465.6 951.4 467.1 C952.7 468.7 953.6 470.2 955.1 471.6 C956.7 472.9 958.7 474.0 960.8 475.1 C963.0 476.2 965.8 477.1 968.0 478.1 C970.3 479.2 972.7 480.3 974.2 481.6 C975.7 483.0 976.6 484.6 976.9 486.3z" stroke-width="0.75"/>
<path d="M978.8 488.3Q978.8 506.3 979.3 528.3"/>
<path d="M978.8 496.6Q980.4 514.6 979.3 536.6"/>
<path d="M969.5 503.6Q971.3 521.6 970.0 543.6"/>
<path d="M956.2 508.1Q956.5 526.1 956.7 548.1"/>
<path d="M944.8 512.1Q943.3 530.1 945.3 552.1"/>
<path d="M935.1 517.4Q933.2 535.4 935.6 557.4"/>
<path d="M923.1 522.5Q922.5 540.5 923.6 562.5"/>
<path d="M907.9 524.4Q909.2 542.4 908.4 564.4"/>
<path d="M892.9 522.2Q894.9 540.2 893.4 562.2"/>
<path d="M880.0 518.2Q880.8 536.2 880.5 558.2"/>
<path d="M867.4 514.4Q866.3 532.4 867.9 554.4"/>
<path d="M854.4 510.3Q852.4 528.3 854.9 550.3"/>
<path d="M844.9 503.9Q843.8 521.9 845.4 543.9"/>
<path d="M842.9 495.9Q843.8 513.9 843.4 535.9"/>
<path d="M846.8 488.3Q848.7 506.3 847.3 528.3"/>
<path d="M974.1 499.4 C974.9 500.3 977.8 503.3 978.8 505.3 C979.7 507.2 980.2 509.2 979.8 511.0 C979.3 512.8 977.9 514.4 976.0 515.8 C974.1 517.1 971.1 518.2 968.2 519.0 C965.4 519.9 961.9 520.3 958.8 520.8 C955.8 521.4 952.8 521.6 950.1 522.2 C947.4 522.8 945.2 523.4 942.8 524.4 C940.5 525.3 938.5 526.5 936.1 527.8 C933.7 529.1 931.2 530.7 928.3 532.0 C925.4 533.4 922.1 534.8 918.7 535.8 C915.3 536.8 911.5 537.6 907.9 538.0 C904.3 538.4 900.6 538.3 897.2 538.1 C893.8 537.9 890.6 537.3 887.5 536.8 C884.5 536.2 881.7 535.4 878.8 534.6 C875.8 533.9 873.0 533.1 870.0 532.1 C867.0 531.2 863.8 530.2 860.8 528.9 C857.8 527.7 854.6 526.2 852.1 524.5 C849.5 522.8 847.1 520.7 845.5 518.6 C844.0 516.5 843.0 514.0 842.8 511.8 C842.5 509.5 843.1 507.1 843.8 505.1 C844.4 503.0 845.8 501.1 846.8 499.3 C847.7 497.6 849.0 495.5 849.4 494.7"/>
<path d="M974.1 512.9 C974.9 513.7 977.8 516.4 978.8 518.2 C979.7 519.9 980.2 521.7 979.8 523.3 C979.3 524.9 977.9 526.4 976.0 527.7 C974.1 528.9 971.1 529.9 968.2 530.7 C965.4 531.5 961.9 532.0 958.8 532.6 C955.8 533.3 952.8 533.7 950.1 534.4 C947.4 535.1 945.2 536.0 942.8 537.1 C940.5 538.2 938.5 539.6 936.1 541.1 C933.7 542.6 931.2 544.4 928.3 545.9 C925.4 547.4 922.1 548.9 918.7 550.0 C915.3 551.1 911.5 551.9 907.9 552.3 C904.3 552.6 900.6 552.5 897.2 552.2 C893.8 551.9 890.6 551.2 887.5 550.4 C884.5 549.7 881.7 548.7 878.8 547.7 C875.8 546.8 873.0 545.7 870.0 544.6 C867.0 543.5 863.8 542.4 860.8 541.0 C857.8 539.6 854.6 538.0 852.1 536.3 C849.5 534.5 847.1 532.4 845.5 530.4 C844.0 528.3 843.0 525.9 842.8 523.8 C842.5 521.7 843.1 519.5 843.8 517.6 C844.4 515.7 845.8 514.0 846.8 512.4 C847.7 510.9 849.0 509.0 849.4 508.4"/>
<path d="M870 485Q905 481 945 486M860 480Q905 476 955 482" stroke-width="0.6"/>
<path d="M851.6 458.1 C854.5 454.7 855.1 454.4 859.4 453.2 C863.7 451.9 872.3 450.8 877.2 450.6 C882.1 450.4 883.9 452.1 889.0 452.2 C894.1 452.3 901.8 451.0 908.0 451.0 C914.2 451.0 921.5 451.5 926.5 452.2 C931.5 452.9 935.0 454.2 938.3 455.2 C941.6 456.2 942.9 456.3 946.2 458.1 C949.5 459.9 954.7 463.4 958.0 466.0 C961.3 468.6 963.7 470.3 966.0 473.9 C968.3 477.5 970.6 483.1 971.9 487.7 C973.2 492.3 973.8 496.6 973.8 501.5 C973.8 506.4 973.2 512.4 971.9 517.3 C970.6 522.2 968.3 527.5 966.0 531.1 C963.7 534.7 961.3 536.4 958.0 539.0 C954.7 541.6 950.8 544.6 946.2 546.9 C941.6 549.2 936.1 550.8 930.5 552.8 C924.9 554.8 918.0 557.7 912.7 558.7 C907.4 559.8 903.5 560.1 898.9 559.1 C894.3 558.1 890.0 555.5 885.1 552.8 C880.2 550.1 873.6 544.2 869.3 542.9 C865.0 541.6 862.7 544.6 859.4 544.9 C856.1 545.2 851.6 546.9 849.6 544.9 C847.6 542.9 848.6 538.3 847.6 533.0 C846.6 527.7 845.2 519.2 843.7 513.3 C842.2 507.4 839.7 502.5 838.7 497.6 C837.7 492.7 837.3 487.8 837.8 483.8 C838.3 479.9 839.4 478.2 841.7 473.9 C844.0 469.6 848.7 461.6 851.6 458.1z" stroke-width="1"/>
</g>
<g stroke="#151515" stroke-width="0.5" fill="none"><circle cx="955" cy="537" r="12"/><circle cx="856" cy="569" r="10.5"/><circle cx="851" cy="551" r="6.5"/></g>
<path d="M900.9 402.9C906 405 915 418 918.6 426.6C923 434 926 440 925.5 446C925 452 918 456 908 456.5C897 456 889 452 888 446C887 435 892 422 893 418C895 410 898 404 900.9 402.9z" fill="url(#mflame)" stroke="#272622" stroke-width="0.6"/>
<path d="M891.8 424L901.9 426L910 421.2L918.8 430M889.8 436.7L898.5 435.4L910 443.5L919.4 431.3M910 443.5L911.3 465M901.9 426L901.2 447.5M888 452Q905 448 925 452" fill="none" stroke="#1a1a1a" stroke-width="0.55"/><ellipse cx="907" cy="429.5" rx="3.8" ry="2" fill="none" stroke="#222" stroke-width="0.5"/>
</svg>
<div id="tb"></div>
<div class="t" style="left:148.6px;top:5.2px;font-size:11.63px;font-weight:bold;color:#f4f5f7;transform:scaleX(0.948);">SOLID</div>
<div class="t" style="left:231.5px;top:5.2px;font-size:11.63px;font-weight:normal;color:#e6e8ec;transform:scaleX(0.865);-webkit-text-stroke:0.35px #e6e8ec;">SURFACE</div>
<div class="t" style="left:329.2px;top:5.2px;font-size:11.63px;font-weight:normal;color:#e6e8ec;transform:scaleX(0.878);-webkit-text-stroke:0.35px #e6e8ec;">MESH</div>
<div class="t" style="left:407.4px;top:5.2px;font-size:11.63px;font-weight:normal;color:#e6e8ec;transform:scaleX(0.903);-webkit-text-stroke:0.35px #e6e8ec;">SHEET METAL</div>
<div class="t" style="left:530.7px;top:5.2px;font-size:11.63px;font-weight:normal;color:#e6e8ec;transform:scaleX(0.873);-webkit-text-stroke:0.35px #e6e8ec;">PLASTIC</div>
<div class="t" style="left:623.7px;top:5.2px;font-size:11.63px;font-weight:normal;color:#e6e8ec;transform:scaleX(0.911);-webkit-text-stroke:0.35px #e6e8ec;">MANAGE</div>
<div class="t" style="left:716.5px;top:5.2px;font-size:11.63px;font-weight:normal;color:#e6e8ec;transform:scaleX(0.886);-webkit-text-stroke:0.35px #e6e8ec;">UTILITIES</div>
<div class="abs" style="left:137px;top:20.5px;width:59px;height:3px;background:#e9ebee"></div>
<div class="abs" style="left:10px;top:10px;width:108px;height:60px;border:1px solid #5d6878;border-radius:4px;box-sizing:content-box"></div>
<div class="t" style="left:39.6px;top:32.7px;font-size:13.08px;font-weight:bold;color:#f4f5f7;transform:scaleX(0.819);">DESIGN</div>
<div class="t" style="left:253.2px;top:65.7px;font-size:11.34px;font-weight:normal;color:#eef0f3;transform:scaleX(0.893);font-weight:500;-webkit-text-stroke:0.25px #eef0f3;">CREATE</div>
<div class="t" style="left:544.6px;top:65.7px;font-size:11.34px;font-weight:normal;color:#eef0f3;transform:scaleX(0.939);font-weight:500;-webkit-text-stroke:0.25px #eef0f3;">MODIFY</div>
<div class="t" style="left:743.4px;top:65.7px;font-size:11.34px;font-weight:normal;color:#eef0f3;transform:scaleX(0.880);font-weight:500;-webkit-text-stroke:0.25px #eef0f3;">ASSEMBLE</div>
<div class="t" style="left:861.7px;top:65.7px;font-size:11.34px;font-weight:normal;color:#eef0f3;transform:scaleX(0.913);font-weight:500;-webkit-text-stroke:0.25px #eef0f3;">CONFIGURE</div>
<div class="t" style="left:963.8px;top:65.7px;font-size:11.34px;font-weight:normal;color:#eef0f3;transform:scaleX(0.923);font-weight:500;-webkit-text-stroke:0.25px #eef0f3;">CONSTRUCT</div>
<div class="t" style="left:1069.5px;top:65.7px;font-size:11.34px;font-weight:normal;color:#eef0f3;transform:scaleX(0.910);font-weight:500;-webkit-text-stroke:0.25px #eef0f3;">INSPECT</div>
<div class="t" style="left:1159.6px;top:65.7px;font-size:11.34px;font-weight:normal;color:#eef0f3;transform:scaleX(0.904);font-weight:500;-webkit-text-stroke:0.25px #eef0f3;">INSERT</div>
<div class="t" style="left:1249.4px;top:65.7px;font-size:11.34px;font-weight:normal;color:#eef0f3;transform:scaleX(0.828);font-weight:500;-webkit-text-stroke:0.25px #eef0f3;">SELECT</div>
<svg class="abs" style="left:0;top:0" width="1390" height="85" viewBox="0 0 1390 85">
<path d="M87.0 38.6h5.5l-2.75 3.3z" fill="#9aa3ae"/>
<path d="M297.5 69.8h5.5l-2.75 3.3z" fill="#9aa3ae"/>
<path d="M591.5 69.8h5.5l-2.75 3.3z" fill="#9aa3ae"/>
<path d="M802.8 69.8h5.5l-2.75 3.3z" fill="#9aa3ae"/>
<path d="M929.0 69.8h5.5l-2.75 3.3z" fill="#9aa3ae"/>
<path d="M1033.8 69.8h5.5l-2.75 3.3z" fill="#9aa3ae"/>
<path d="M1118.5 69.8h5.5l-2.75 3.3z" fill="#9aa3ae"/>
<path d="M1202.0 69.8h5.5l-2.75 3.3z" fill="#9aa3ae"/>
<path d="M1291.5 69.8h5.5l-2.75 3.3z" fill="#9aa3ae"/>
<rect x="435.5" y="27" width="1" height="50" fill="#555f6e"/>
<rect x="704.8" y="27" width="1" height="50" fill="#555f6e"/>
<rect x="844.7" y="27" width="1" height="50" fill="#555f6e"/>
<rect x="949.0" y="27" width="1" height="50" fill="#555f6e"/>
<rect x="1052.8" y="27" width="1" height="50" fill="#555f6e"/>
<rect x="1136.7" y="27" width="1" height="50" fill="#555f6e"/>
<rect x="1233.8" y="27" width="1" height="50" fill="#555f6e"/>
<g fill="none" stroke="#c8c8c8" stroke-width="1.2"><path d="M136.7 29v26.5M137 28.4h27M164.2 30v15M137 55.6h16"/><path d="M143.7 36.7v10.5M145 35.5h12"/><path d="M148.3 48.6Q157 46 158.1 36.7"/></g>
<rect x="135.0" y="27.0" width="3.6" height="3.6" fill="#d0d0d0"/>
<rect x="162.4" y="27.0" width="3.6" height="3.6" fill="#d0d0d0"/>
<rect x="135.0" y="54.2" width="3.6" height="3.6" fill="#d0d0d0"/>
<rect x="142.2" y="34.0" width="3.0" height="3.0" fill="#d0d0d0"/>
<rect x="156.0" y="34.0" width="3.0" height="3.0" fill="#d0d0d0"/>
<rect x="142.2" y="47.0" width="3.0" height="3.0" fill="#d0d0d0"/>
<path d="M158.3 45.3h4.8v5.2h4.8v4.8h-4.8v3.7h-4.8v-3.7h-5.1v-4.8h5.1z" fill="#5cc96a"/>
<path d="M178.9 49.5L184 44.5H203.5V54L198 59H178.9z" fill="#f0f0f0"/>
<path d="M178.9 54H198V59H178.9z" fill="#d9d9d9"/><path d="M198 54L203.5 48.7V54L198 59z" fill="#bcbcbc"/>
<path d="M178.9 32.4L184.6 26.7H203.4L197.9 32.4z" fill="#b8e1fb"/>
<rect x="178.9" y="32.4" width="19" height="21.4" fill="#8ccbf6"/>
<path d="M197.9 32.4L203.4 26.7V48.5L197.9 53.8z" fill="#5fa5dc"/>
<path d="M207.3 53V30" stroke="#e8e8e8" stroke-width="1.6"/><path d="M204.6 31.5L207.3 27.5L210 31.5z" fill="#e8e8e8"/>
<path d="M223.5 34Q236 24 250.5 34" fill="none" stroke="#e0e0e0" stroke-width="1.4"/><path d="M221.8 34.8L226.5 30.8L227 35.5z" fill="#e0e0e0"/>
<path d="M221 42Q237 32 253.5 40.5L248 47Q237 40.5 226.5 49.5z" fill="#b8e1fb"/>
<path d="M221 42L226.5 49.5V56.3L221 48.5z" fill="#5fa5dc"/>
<path d="M226.5 49.5Q237 40.5 248 47V54.5Q237 48 226.5 56.3z" fill="#8ccbf6"/>
<path d="M248 47L253.5 40.5V48.5L248 54.5z" fill="#d9d9d9"/>
<path d="M264 34.9L271.5 27H297L289 34.9z" fill="#f0f0f0"/>
<rect x="264" y="34.9" width="25" height="24.1" fill="#d9d9d9"/>
<path d="M289 34.9L297 27V51L289 59z" fill="#bcbcbc"/>
<circle cx="276.3" cy="47.1" r="7.8" fill="#2e3642"/><clipPath id="hc"><circle cx="276.3" cy="47.1" r="6.9"/></clipPath><circle cx="276.3" cy="47.1" r="6.9" fill="#2e3642"/><circle cx="274.6" cy="48.8" r="6.6" fill="#8ccbf6" clip-path="url(#hc)"/>
<path d="M314.6 32.4h13.6M310.8 35.9v13.8M314.6 53.3h13.6" stroke="#c8c8c8" stroke-width="1.2"/>
<rect x="307" y="28.9" width="7.6" height="7" fill="#d9d9d9"/>
<rect x="328.2" y="28.9" width="7.6" height="7.3" fill="#8ccbf6"/>
<rect x="307.0" y="49.7" width="7.6" height="7.3" fill="#8ccbf6"/>
<rect x="328.2" y="49.7" width="7.6" height="7.3" fill="#8ccbf6"/>
<rect x="350.4" y="26.5" width="28" height="28.5" rx="6" fill="#c9a6f2"/><rect x="352" y="32.5" width="20" height="21" rx="4" fill="#d4b1f8"/><path d="M360.5 28v26M351 44.5h26M370 27.5V54" stroke="#a985d6" stroke-width="0.8" fill="none"/>
<path d="M372.2 42h4.6v6.2h5.8v4.6h-5.8v6h-4.6v-6h-6.2v-4.6h6.2z" fill="#5cc96a"/>
<path d="M397 31.5Q405 37 405.5 40L401.5 55Q408 52 411 54L413 40Q416 37 421 32.5" fill="none" stroke="#7dbfee" stroke-width="3.2"/>
<path d="M401 38Q408.5 43 417 37.5L410.5 51z" fill="#7dbfee"/><path d="M404 40.5L415 39L409.5 48z" fill="#3b4453"/>
<rect x="392.6" y="26.5" width="7.2" height="7" fill="#d9d9d9"/><path d="M418.5 31.5L423 29L425 34L421.5 37z" fill="#d9d9d9"/>
<circle cx="408.3" cy="53.3" r="4.8" fill="#dedede" stroke="#7dbfee" stroke-width="1.2"/><circle cx="408.3" cy="53.3" r="1.8" fill="#555"/>
<path d="M448.6 32L454 27H460L455 32z" fill="#f0f0f0"/><rect x="448.6" y="32" width="6.5" height="26.8" fill="#d9d9d9"/>
<path d="M455.6 32L461 27H470.2L465 32z" fill="#b8e1fb"/><rect x="455.6" y="32" width="9.6" height="26.8" fill="#8ccbf6"/><path d="M465 32L470.2 27V53.5L465 58.8z" fill="#5fa5dc"/>
<path d="M467.5 42.3H475" stroke="#fff" stroke-width="1.6"/><path d="M474 39.8L477.8 42.3L474 44.8z" fill="#fff"/>
<path d="M489.8 35L497 27H507Q516 27 522.6 37L515 45Q510 36 500.5 35z" fill="#f0f0f0"/>
<path d="M500.5 34.8L507 27Q518 28 522.6 41.5L515 49.5Q512 37 500.5 34.8z" fill="#8ccbf6"/>
<path d="M489.8 35H500.5Q512.5 37 515 49.5V58.8H489.8z" fill="#d9d9d9"/><path d="M515 49.5L522.6 42V51.5L515 58.8z" fill="#bcbcbc"/>
<path d="M533.2 35L541 27H565.9L558 35z" fill="#f0f0f0"/><rect x="533.2" y="35" width="24.8" height="23.8" fill="#d9d9d9"/><path d="M558 35L565.9 27V51L558 58.8z" fill="#bcbcbc"/>
<rect x="536.7" y="38" width="17.6" height="17.7" fill="#2e3642"/><rect x="537.5" y="38.8" width="16" height="16.1" fill="#5fa5dc"/><path d="M537.5 54.9L545.5 46.8H553.5V54.9z" fill="#b8e1fb"/><rect x="545.5" y="38.8" width="8" height="8" fill="#3b4453"/>
<path d="M576.5 40L581 35.5H587V29L591.5 24.5H608.5V46.8L604 51.5H598.5V54.5L594 58.8H576.5z" fill="#8ccbf6"/>
<path d="M587 31.5L591.5 27H608.5L604 31.5z M576.5 42L581 37.5H587V42z" fill="#b8e1fb"/><path d="M604 31.5L608.5 27V46.5L604 50.5z M594 51.5L598.5 47.5V54.5L594 58.8z" fill="#5fa5dc"/>
<path d="M621 33L626 27H649L644.5 33z" fill="#b8e1fb"/><rect x="621" y="33" width="23.5" height="12.5" fill="#8ccbf6"/><path d="M644.5 33L649 27.5V41L644.5 45.5z" fill="#5fa5dc"/>
<path d="M619 45.5H644.5L651 38.5" fill="none" stroke="#7fc4f4" stroke-width="1.1"/>
<rect x="621" y="48" width="23.5" height="10" fill="#d9d9d9"/><path d="M644.5 48L649 43.5V53.5L644.5 58z" fill="#bcbcbc"/>
<g fill="#fff"><path d="M678.3 28L673.8 34.6H682.8z M678.3 58.3L673.8 51.7H682.8z M662.8 42.9L669.4 38.4V47.4z M693.8 42.9L687.2 38.4V47.4z"/><rect x="677.6" y="33" width="1.5" height="20"/><rect x="668" y="42.2" width="21" height="1.5"/></g>
<g fill="#d5d5d5"><path d="M716 57L717.5 44Q720 38 724 38.5V55L722 57z"/><path d="M721 40Q726 37 728 41V54Q724 55 721 53z" fill="#e6e6e6"/><path d="M733 32L737.8 37V54.5L733 49z"/><path d="M742.6 27L748.8 32.5V50L742.6 44.5z"/><path d="M728 40L733 35V52L728 56z" fill="#c4c4c4"/><path d="M737.8 37L742.6 32V49L737.8 54z" fill="#c4c4c4"/></g>
<rect x="730.5" y="37" width="1.2" height="6" fill="#5fa5dc"/><rect x="739.5" y="32" width="1.2" height="6" fill="#5fa5dc"/>
<path d="M759.5 34.5L763 31H775.5V42L772.5 46H759.5z" fill="#b8e1fb"/><path d="M759.5 34.5H772.5V46H759.5z" fill="#6cb2e6"/><path d="M772.5 34.5L775.5 31V43L772.5 46z" fill="#4d95cc"/>
<rect x="760" y="46.5" width="11.5" height="11.5" fill="#d9d9d9"/><rect x="773" y="46.5" width="10.8" height="11.5" fill="#d9d9d9"/><path d="M773 46.5L777 43.5H787L783.8 46.5z" fill="#f5f5f5"/><path d="M783.8 46.5L787 43.5V55L783.8 58z" fill="#bcbcbc"/>
<path d="M776.5 27h4.2v6.3h6v4.2h-6v5.3h-4.2v-5.3h-6v-4.2h6z" fill="#2fb24a"/>
<g fill="#d5d5d5"><path d="M805 35L812 30V55L805 57z"/><path d="M826.5 31L831.5 36V56L826.5 51z"/><path d="M820 43Q822 41 825 42V52Q822 53 820 51z" fill="#e2e2e2"/><path d="M810 31Q813 29 816 31V41Q813 42.5 810 41z" fill="#e2e2e2"/></g>
<rect x="812.5" y="41" width="1.2" height="6" fill="#5fa5dc"/><rect x="822" y="36.5" width="1.2" height="5" fill="#5fa5dc"/>
<path d="M859.3 34.5L864.6 27H887.5L882 34.5z" fill="#f0f0f0"/><rect x="859.3" y="34.5" width="22.7" height="20.6" fill="#d9d9d9"/><path d="M882 34.5L887.5 27V49.5L882 55z" fill="#bcbcbc"/>
<g fill="#e8e8e8"><rect x="878" y="49.2" width="13.5" height="2"/><rect x="878" y="55" width="13.5" height="2"/><rect x="887.5" y="53.5" width="1.8" height="5"/></g><rect x="880.8" y="46.5" width="1.8" height="6" fill="#4aa3e8"/>
<rect x="901.7" y="27" width="31" height="27.5" fill="#f2f2f2"/><rect x="901.7" y="27" width="31" height="4.2" fill="#9c9c9c"/><rect x="903.5" y="28.3" width="3.5" height="1.5" fill="#555"/>
<g fill="none" stroke="#8e8e8e" stroke-width="1"><rect x="906" y="36.5" width="23.5" height="14.5"/><path d="M906 41.5h23.5M906 46.3h23.5M911 36.5v14.5M916 36.5v14.5"/></g>
<g fill="#e8e8e8"><rect x="920.5" y="49.2" width="13.5" height="2"/><rect x="920.5" y="55" width="13.5" height="2"/><rect x="930" y="53.5" width="1.8" height="5"/></g><rect x="923.5" y="46.5" width="1.8" height="6" fill="#4aa3e8"/>
<path d="M986 36L993.2 27.3H1003L995.5 36z" fill="#f0f0f0"/><rect x="986" y="36" width="9.5" height="22" fill="#d9d9d9"/><path d="M995.5 36L1003 27.3V49.2L995.5 58z" fill="#7fd59e"/>
<path d="M1007.5 36L1017 27.3V49.2L1007.5 58z" fill="#f2b483"/>
<rect x="1080.8" y="43.8" width="29.5" height="6.2" fill="#f5c86a"/><g fill="#b89040"><rect x="1083.0" y="43.8" width="0.8" height="2"/><rect x="1085.8" y="43.8" width="0.8" height="2"/><rect x="1088.6" y="43.8" width="0.8" height="2"/><rect x="1091.4" y="43.8" width="0.8" height="2"/><rect x="1094.2" y="43.8" width="0.8" height="2"/><rect x="1097.0" y="43.8" width="0.8" height="2"/><rect x="1099.8" y="43.8" width="0.8" height="2"/><rect x="1102.6" y="43.8" width="0.8" height="2"/><rect x="1105.4" y="43.8" width="0.8" height="2"/><rect x="1108.2" y="43.8" width="0.8" height="2"/></g>
<path d="M1081.5 34v8.5M1109.7 34v8.5" stroke="#cfcfcf" stroke-width="1.4"/><path d="M1083 38.3H1108" stroke="#e6e6e6" stroke-width="1.1"/><path d="M1082.5 38.3L1086.5 36.2V40.4z M1108.6 38.3L1104.6 36.2V40.4z" fill="#e6e6e6"/>
<path d="M1154.4 26.7H1174.5L1180.5 32.7V59H1154.4z" fill="#d6d6d6"/><path d="M1174.5 26.7L1180.5 32.7H1174.5z" fill="#9c9c9c"/><rect x="1154.4" y="47.4" width="26.1" height="11.6" fill="#6f6f6f"/>
<text x="1167.4" y="56.6" font-family="Liberation Sans" font-weight="bold" font-size="9" fill="#f0f0f0" text-anchor="middle">SVG</text>
<path d="M1148 33.4H1156V29.4L1168.2 35.6L1156 41.8V37.8H1148z" fill="#6cc3f7"/>
<rect x="1192.2" y="27.6" width="29.7" height="29.7" fill="#86bde4"/><path d="M1192.2 50Q1198 40 1203 42Q1208 44 1211 49Q1215 44 1221.9 50.5V57.3H1192.2z" fill="#4b8dc2"/><circle cx="1214.7" cy="35.9" r="3" fill="#f6e08b"/>
<rect x="1254.7" y="24" width="38" height="38" rx="2" fill="#3e4d5f" stroke="#2f6f96" stroke-width="1"/>
<rect x="1257.5" y="27.5" width="28" height="21" fill="none" stroke="#5ccc78" stroke-width="1.1" stroke-dasharray="2.6 1.6"/>
<path d="M1278.2 41.5V58.5L1282 54.6L1285 60.4L1287.6 59.2L1284.7 53.4H1289.8z" fill="#fff"/>
</svg>
<div class="abs" style="left:2.3px;top:89px;width:300.3px;height:24.5px;background:#3b4453"></div>
<svg class="abs" style="left:0;top:85px" width="310" height="230" viewBox="0 85 310 230">
<path d="M9 101.4L13 98.8V104z M13 101.4L17 98.8V104z" fill="#7f8ea3"/>
<rect x="281.4" y="100.3" width="8.1" height="1.6" fill="#c4c9d0"/>
<rect x="17" y="117" width="284" height="23.5" fill="#fff" opacity="0.9"/>
<rect x="38.6" y="119.2" width="24.7" height="19.3" fill="#3d4656"/><rect x="63.3" y="119.2" width="209.2" height="19.3" fill="#232a35"/><rect x="272.5" y="119.2" width="25.9" height="19.3" fill="#3d4656"/>
<circle cx="284.3" cy="128.8" r="4.6" fill="none" stroke="#fff" stroke-width="2.6"/>
<path d="M41.5 129.0Q49.5 119.1 57.5 129.0Q49.5 138.9 41.5 129.0z" fill="#c5c9cf"/><circle cx="49.5" cy="129.0" r="3.2" fill="#3d4656"/><circle cx="49.5" cy="129.0" r="2.1" fill="#c5c9cf"/><circle cx="49.5" cy="129.0" r="1.3" fill="#6b7380"/>
<path d="M67.5 125L71 121.8H81.7L78.5 125z" fill="#b9e0fb"/><path d="M67.5 125H78.5V135.6H67.5z" fill="#8ccbf6"/><path d="M78.5 125L81.7 121.8V132.5L78.5 135.6z" fill="#62a9de"/>
<path d="M20 126.5L24.7 131.2L29.4 126.5" fill="none" stroke="#333" stroke-width="2.6"/><path d="M20 126.5L24.7 131.2L29.4 126.5" fill="none" stroke="#fff" stroke-width="1"/>
<rect x="31" y="141.1" width="177.3" height="23.5" fill="#fff" opacity="0.9"/>
<rect x="56.6" y="143.1" width="149.7" height="19.6" fill="#3d4656"/>
<path d="M40 148.4L44.3 152.9L40 157.4" fill="none" stroke="#333" stroke-width="2.6"/><path d="M40 148.4L44.3 152.9L40 157.4" fill="none" stroke="#fff" stroke-width="1"/>
<rect x="65.7" y="144.7" width="3.4" height="3.6" fill="#a5abb4" transform="rotate(0 67.4 152.9)"/><rect x="65.7" y="144.7" width="3.4" height="3.6" fill="#a5abb4" transform="rotate(45 67.4 152.9)"/><rect x="65.7" y="144.7" width="3.4" height="3.6" fill="#a5abb4" transform="rotate(90 67.4 152.9)"/><rect x="65.7" y="144.7" width="3.4" height="3.6" fill="#a5abb4" transform="rotate(135 67.4 152.9)"/><rect x="65.7" y="144.7" width="3.4" height="3.6" fill="#a5abb4" transform="rotate(180 67.4 152.9)"/><rect x="65.7" y="144.7" width="3.4" height="3.6" fill="#a5abb4" transform="rotate(225 67.4 152.9)"/><rect x="65.7" y="144.7" width="3.4" height="3.6" fill="#a5abb4" transform="rotate(270 67.4 152.9)"/><rect x="65.7" y="144.7" width="3.4" height="3.6" fill="#a5abb4" transform="rotate(315 67.4 152.9)"/><circle cx="67.4" cy="152.9" r="6" fill="#a5abb4"/><circle cx="67.4" cy="152.9" r="2.6" fill="#3d4656"/>
<rect x="31" y="165.1" width="145.4" height="23.5" fill="#fff" opacity="0.9"/>
<rect x="56.6" y="167.1" width="117.8" height="19.6" fill="#3d4656"/>
<path d="M40 172.4L44.3 176.9L40 181.4" fill="none" stroke="#333" stroke-width="2.6"/><path d="M40 172.4L44.3 176.9L40 181.4" fill="none" stroke="#fff" stroke-width="1"/>
<path d="M59.3 169.7h6l1.5 2h9v12.5h-16.5z" fill="#d7d7d7"/><rect x="59.3" y="174.2" width="16.5" height="10" fill="#e0e0e0"/>
<rect x="31" y="189.1" width="130.2" height="23.5" fill="#fff" opacity="0.9"/>
<rect x="56.6" y="191.1" width="102.6" height="19.6" fill="#3d4656"/>
<path d="M40 196.4L44.3 200.9L40 205.4" fill="none" stroke="#333" stroke-width="2.6"/><path d="M40 196.4L44.3 200.9L40 205.4" fill="none" stroke="#fff" stroke-width="1"/>
<path d="M59.8 200.9Q67.5 191.3 75.2 200.9Q67.5 210.5 59.8 200.9z" fill="none" stroke="#a5abb4" stroke-width="1.3"/><circle cx="67.5" cy="200.9" r="3.1" fill="#3d4656"/><circle cx="67.5" cy="200.9" r="2.0" fill="none"/><circle cx="67.5" cy="200.9" r="1.2" fill="none"/>
<path d="M61 194.6L74 207.1" stroke="#a5abb4" stroke-width="1.3"/>
<path d="M84.3 193.7h6l1.5 2h9v12.5h-16.5z" fill="#d7d7d7"/><rect x="84.3" y="198.2" width="16.5" height="10" fill="#e0e0e0"/>
<rect x="31" y="213.1" width="134.2" height="23.5" fill="#fff" opacity="0.9"/>
<rect x="56.6" y="215.1" width="106.6" height="19.6" fill="#3d4656"/>
<path d="M40 220.4L44.3 224.9L40 229.4" fill="none" stroke="#333" stroke-width="2.6"/><path d="M40 220.4L44.3 224.9L40 229.4" fill="none" stroke="#fff" stroke-width="1"/>
<path d="M59.8 224.9Q67.5 215.3 75.2 224.9Q67.5 234.5 59.8 224.9z" fill="#c5c9cf"/><circle cx="67.5" cy="224.9" r="3.1" fill="#3d4656"/><circle cx="67.5" cy="224.9" r="2.0" fill="#c5c9cf"/><circle cx="67.5" cy="224.9" r="1.2" fill="#6b7380"/>
<path d="M84.3 217.7h6l1.5 2h9v12.5h-16.5z" fill="#d7d7d7"/><rect x="84.3" y="222.2" width="16.5" height="10" fill="#e0e0e0"/>
<rect x="31" y="237.1" width="146.5" height="23.5" fill="#fff" opacity="0.9"/>
<rect x="56.6" y="239.1" width="118.9" height="19.6" fill="#3d4656"/>
<path d="M40 244.4L44.3 248.9L40 253.4" fill="none" stroke="#333" stroke-width="2.6"/><path d="M40 244.4L44.3 248.9L40 253.4" fill="none" stroke="#fff" stroke-width="1"/>
<path d="M59.8 248.9Q67.5 239.3 75.2 248.9Q67.5 258.5 59.8 248.9z" fill="#c5c9cf"/><circle cx="67.5" cy="248.9" r="3.1" fill="#3d4656"/><circle cx="67.5" cy="248.9" r="2.0" fill="#c5c9cf"/><circle cx="67.5" cy="248.9" r="1.2" fill="#6b7380"/>
<path d="M84.3 241.7h6l1.5 2h9v12.5h-16.5z" fill="#d7d7d7"/><rect x="84.3" y="246.2" width="16.5" height="10" fill="#e0e0e0"/>
<rect x="31" y="261.1" width="146.5" height="23.5" fill="#fff" opacity="0.9"/>
<rect x="56.6" y="263.1" width="118.9" height="19.6" fill="#3d4656"/>
<path d="M40 268.4L44.3 272.9L40 277.4" fill="none" stroke="#333" stroke-width="2.6"/><path d="M40 268.4L44.3 272.9L40 277.4" fill="none" stroke="#fff" stroke-width="1"/>
<path d="M59.8 272.9Q67.5 263.3 75.2 272.9Q67.5 282.5 59.8 272.9z" fill="#c5c9cf"/><circle cx="67.5" cy="272.9" r="3.1" fill="#3d4656"/><circle cx="67.5" cy="272.9" r="2.0" fill="#c5c9cf"/><circle cx="67.5" cy="272.9" r="1.2" fill="#6b7380"/>
<path d="M84.3 265.7h6l1.5 2h9v12.5h-16.5z" fill="#d7d7d7"/><rect x="84.3" y="270.2" width="16.5" height="10" fill="#e0e0e0"/>
<rect x="31" y="285.1" width="166.4" height="23.5" fill="#fff" opacity="0.9"/>
<rect x="56.6" y="287.1" width="138.8" height="19.6" fill="#3d4656"/>
<path d="M40 292.4L44.3 296.9L40 301.4" fill="none" stroke="#333" stroke-width="2.6"/><path d="M40 292.4L44.3 296.9L40 301.4" fill="none" stroke="#fff" stroke-width="1"/>
<path d="M59.8 296.9Q67.5 287.3 75.2 296.9Q67.5 306.5 59.8 296.9z" fill="#c5c9cf"/><circle cx="67.5" cy="296.9" r="3.1" fill="#3d4656"/><circle cx="67.5" cy="296.9" r="2.0" fill="#c5c9cf"/><circle cx="67.5" cy="296.9" r="1.2" fill="#6b7380"/>
<path d="M84.3 289.7h6l1.5 2h9v12.5h-16.5z" fill="#d7d7d7"/><rect x="84.3" y="294.2" width="16.5" height="10" fill="#e0e0e0"/>
</svg>
<div class="t" style="left:31.3px;top:96.0px;font-size:12.79px;font-weight:normal;color:#eef0f3;transform:scaleX(0.837);-webkit-text-stroke:0.2px #eef0f3;">BROWSER</div>
<div class="t" style="left:97.3px;top:122.8px;font-size:11.77px;font-weight:bold;color:#ffffff;transform:scaleX(1.036);">Tarot Tutor – Obj (v1~recov...</div>
<div class="t" style="left:89.8px;top:147.0px;font-size:11.77px;font-weight:normal;color:#ebedf0;transform:scaleX(1.008);-webkit-text-stroke:0.2px #ebedf0;">Document Settings</div>
<div class="t" style="left:89.7px;top:171.0px;font-size:11.77px;font-weight:normal;color:#ebedf0;transform:scaleX(0.972);-webkit-text-stroke:0.2px #ebedf0;">Named Views</div>
<div class="t" style="left:114.6px;top:195.0px;font-size:11.77px;font-weight:normal;color:#ebedf0;transform:scaleX(1.038);-webkit-text-stroke:0.2px #ebedf0;">Origin</div>
<div class="t" style="left:114.6px;top:219.0px;font-size:11.77px;font-weight:normal;color:#ebedf0;transform:scaleX(0.956);-webkit-text-stroke:0.2px #ebedf0;">Bodies</div>
<div class="t" style="left:114.6px;top:243.0px;font-size:11.77px;font-weight:normal;color:#ebedf0;transform:scaleX(0.934);-webkit-text-stroke:0.2px #ebedf0;">Canvases</div>
<div class="t" style="left:114.6px;top:267.0px;font-size:11.77px;font-weight:normal;color:#ebedf0;transform:scaleX(0.950);-webkit-text-stroke:0.2px #ebedf0;">Sketches</div>
<div class="t" style="left:114.6px;top:291.0px;font-size:11.77px;font-weight:normal;color:#ebedf0;transform:scaleX(1.026);-webkit-text-stroke:0.2px #ebedf0;">Construction</div>
<div class="abs" style="left:2.6px;top:1009.2px;width:299.4px;height:24.5px;background:#3b4453"></div>
<div class="t" style="left:31.0px;top:1015.9px;font-size:12.94px;font-weight:normal;color:#eef0f3;transform:scaleX(0.857);-webkit-text-stroke:0.2px #eef0f3;">COMMENTS</div>
<div class="abs" style="left:280.5px;top:1020.3px;width:9.5px;height:1.6px;background:#b9c0c9"></div><div class="abs" style="left:284.5px;top:1016.3px;width:1.6px;height:9.5px;background:#b9c0c9"></div>
<div class="abs" style="left:0;top:1038px;width:1390px;height:2px;background:#3b4453"></div>
<svg class="abs" style="left:575px;top:1007px" width="240" height="26" viewBox="575 1007 240 26">
<rect x="575.7" y="1008" width="238.5" height="23.8" fill="#3b4453"/>
<path d="M601.3 1018.3h5l-2.5 3z" fill="#9aa3ae"/>
<path d="M713.0 1018.3h5l-2.5 3z" fill="#9aa3ae"/>
<path d="M744.3 1018.3h5l-2.5 3z" fill="#9aa3ae"/>
<path d="M775.5 1018.3h5l-2.5 3z" fill="#9aa3ae"/>
<path d="M806.0 1018.3h5l-2.5 3z" fill="#9aa3ae"/>
<ellipse cx="586.6" cy="1019.8" rx="8" ry="3.8" fill="none" stroke="#e3e3e3" stroke-width="1.3"/><rect x="585.6" y="1011" width="1.6" height="17" fill="#4fb0f0"/>
<path d="M614 1014.5L620 1012.5V1015H628.5V1027H614z" fill="#dcdcdc"/><rect x="616" y="1017.5" width="10.5" height="6" fill="#5bb0ea"/>
<path d="M641 1020Q639 1016 640.5 1015.5Q642 1015 643.5 1019V1012.5Q644.5 1011 645.8 1012.5V1018.5V1011.5Q647 1010.5 648.2 1011.5V1018.5V1012.5Q649.5 1011.5 650.5 1012.5V1019.5V1015Q652 1014 653 1015V1022Q652 1028 646.5 1028.2Q643 1028 641 1020z" fill="#d8d8d8"/>
<circle cx="669.5" cy="1021" r="5" fill="none" stroke="#e0e0e0" stroke-width="1.4"/><path d="M673 1024.5L677 1028.3" stroke="#d9a050" stroke-width="1.8"/><path d="M675.5 1014.5h6M678.5 1011.5v6M676 1018.5h5.5" stroke="#e0e0e0" stroke-width="1"/>
<rect x="690.5" y="1011.5" width="17" height="16.5" fill="none" stroke="#ddd" stroke-width="1" stroke-dasharray="1.5 1.2"/><circle cx="698" cy="1019.3" r="6.3" fill="#555c68" stroke="#e0e0e0" stroke-width="1.3"/><path d="M702.5 1023.5L706.5 1027.5" stroke="#d9a050" stroke-width="1.8"/>
<rect x="724.2" y="1013" width="16.5" height="11" fill="#aaa" stroke="#e2e2e2" stroke-width="1.3"/><rect x="730.5" y="1024" width="4" height="2.2" fill="#ddd"/><rect x="728" y="1026" width="9" height="1.2" fill="#ddd"/>
<g fill="#cfcfcf"><rect x="755.2" y="1011.0" width="3.6" height="3.6"/><rect x="755.2" y="1015.9" width="3.6" height="3.6"/><rect x="755.2" y="1020.8" width="3.6" height="3.6"/><rect x="760.1" y="1011.0" width="3.6" height="3.6"/><rect x="760.1" y="1015.9" width="3.6" height="3.6"/><rect x="760.1" y="1020.8" width="3.6" height="3.6"/><rect x="765.0" y="1011.0" width="3.6" height="3.6"/><rect x="765.0" y="1015.9" width="3.6" height="3.6"/><rect x="765.0" y="1020.8" width="3.6" height="3.6"/></g>
<g fill="#cfcfcf"><rect x="785.6" y="1012.0" width="7.6" height="6.2"/><rect x="785.6" y="1019.7" width="7.6" height="6.2"/><rect x="795.1" y="1012.0" width="7.6" height="6.2"/><rect x="795.1" y="1019.7" width="7.6" height="6.2"/></g><g fill="#9a9a9a"><rect x="787.1" y="1013.5" width="4.6" height="3.2"/><rect x="787.1" y="1021.2" width="4.6" height="3.2"/><rect x="796.6" y="1013.5" width="4.6" height="3.2"/><rect x="796.6" y="1021.2" width="4.6" height="3.2"/></g>
</svg>
<svg class="abs" style="left:1360px;top:1015px" width="20" height="20" viewBox="1360 1015 20 20"><path d="M1377.3 1032H1370A7.4 7.4 0 1 1 1377.3 1024.6z" fill="#111"/><path d="M1365 1027.5L1373.5 1021.5M1365 1029.5L1375 1023M1367 1030.5L1375.5 1025" stroke="#ccc" stroke-width="0.8"/></svg>
<svg class="abs" style="left:1330px;top:270px" width="60" height="170" viewBox="1330 270 60 170"><defs><radialGradient id="rsh" cx="1400" cy="352" r="48" gradientUnits="userSpaceOnUse" gradientTransform="translate(1400 352) scale(0.8 1.45) translate(-1400 -352)"><stop offset="0.55" stop-color="#000" stop-opacity="0.035"/><stop offset="1" stop-color="#000" stop-opacity="0"/></radialGradient></defs><rect x="1330" y="270" width="60" height="170" fill="url(#rsh)"/><rect x="1389" y="300" width="1" height="105" fill="#e6e6e6"/></svg>
<svg class="abs" style="left:1270px;top:100px" width="110" height="115" viewBox="1270 100 110 115">
<defs><radialGradient id="vcs" cx="0.5" cy="0.5" r="0.5"><stop offset="0" stop-color="#000" stop-opacity="0.18"/><stop offset="1" stop-color="#000" stop-opacity="0"/></radialGradient><linearGradient id="vcf" x1="0" y1="0" x2="0" y2="1"><stop offset="0" stop-color="#f2f2f2"/><stop offset="1" stop-color="#e6e6e6"/></linearGradient></defs>
<ellipse cx="1326" cy="180" rx="36" ry="18" fill="url(#vcs)"/>
<path d="M1291.9 133.1L1318.75 113.1L1359.4 123.75L1336.25 145z" fill="#efefef"/>
<path d="M1291.9 133.1L1336.25 145V187.5L1295 173z" fill="url(#vcf)"/>
<path d="M1336.25 145L1359.4 123.75L1356.9 160L1336.25 187.5z" fill="#e8e8e8"/>
<path d="M1291.9 133.1L1336.25 145L1359.4 123.75M1336.25 145V187.5" fill="none" stroke="#d6d6d6" stroke-width="0.6"/>
<path d="M1290 126.5L1295 173" stroke="#6b74f0" stroke-width="1.2"/><path d="M1295 173L1343.75 192.5" stroke="#ea8c8c" stroke-width="1.2"/>
<text x="0" y="0" font-family="Liberation Sans" font-size="9.5" fill="#6b74f0" transform="translate(1284.6 123.8) scale(1.05 1.25)">Z</text>
<text x="0" y="0" font-family="Liberation Sans" font-size="9.5" fill="#ef7676" transform="translate(1346.3 200.6) scale(1.05 1.25)">X</text>
<text font-family="Liberation Sans" font-weight="bold" font-size="9" fill="#9ea2a8" transform="matrix(0.95 0.26 -0.07 1 1300.5 163.5)">FRONT</text>
<text font-family="Liberation Sans" font-weight="bold" font-size="8" fill="#a5a9ae" transform="matrix(0.95 0.25 -0.55 0.4 1315.5 130.5)">TOP</text>
<text font-family="Liberation Sans" font-weight="bold" font-size="7.5" fill="#a5a9ae" transform="matrix(0.45 -0.5 0.05 1 1342 166)">RIGHT</text>
<path d="M1328.5 141.5L1336 136.5L1341 139L1341.3 151L1336.2 155.5L1328.5 153z" fill="#e4e6ea" opacity="0.7"/>
</svg>
</body></html>
